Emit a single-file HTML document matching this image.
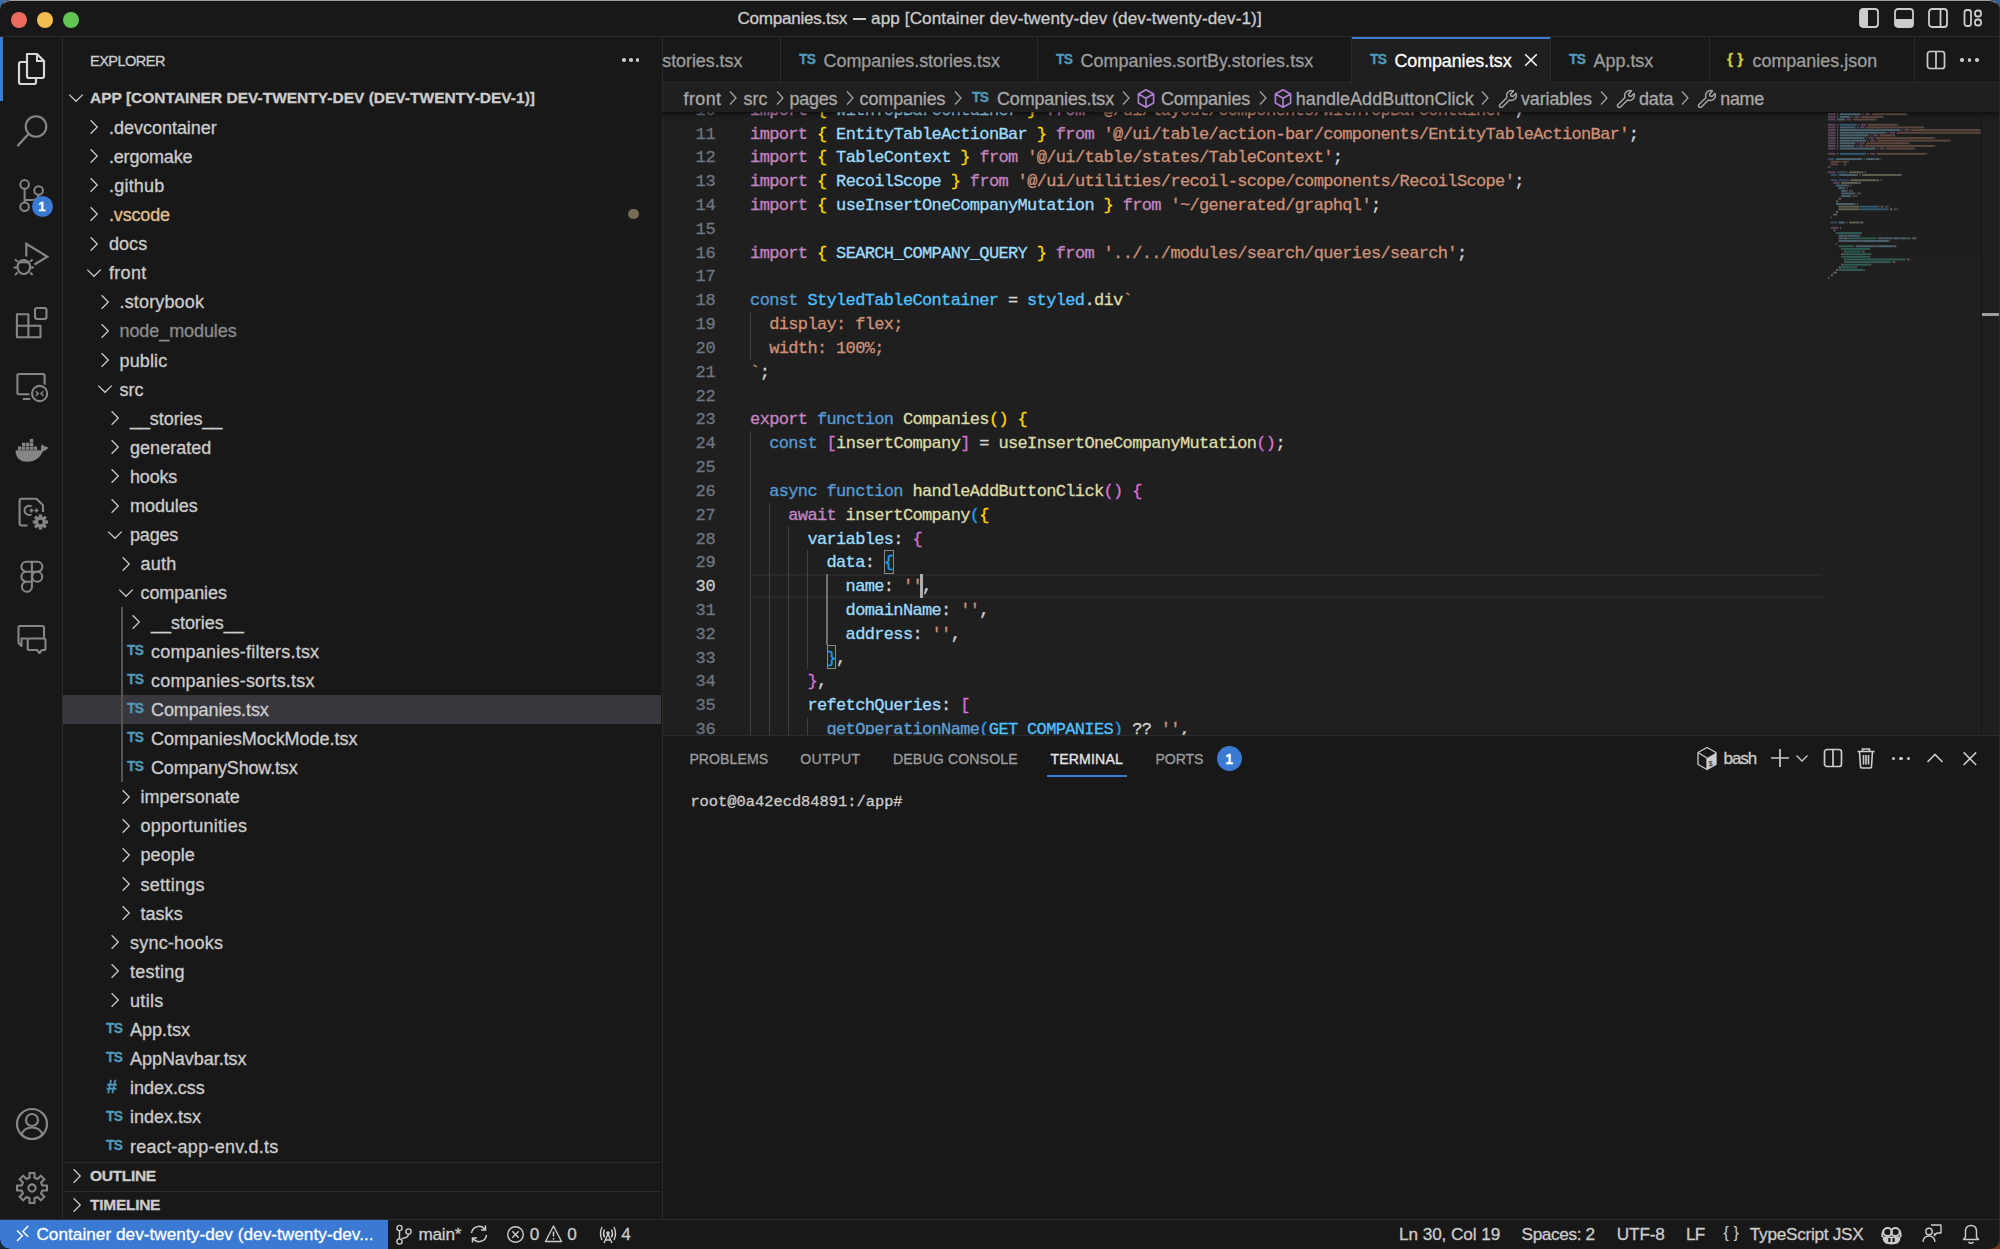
<!DOCTYPE html><html><head><meta charset="utf-8"><title>VS Code</title><style>
html,body{margin:0;padding:0;width:2000px;height:1249px;overflow:hidden;background:#181818;}
.t{position:absolute;white-space:pre;height:40px;line-height:40px;-webkit-text-stroke:0.3px;}
.r{position:absolute;}
</style></head><body>
<div class="r" style="left:0;top:0;width:14px;height:14px;background:#3b6ea6"></div>
<div class="r" style="right:0;top:0;width:14px;height:14px;background:#2f6196"></div>
<div class="r" style="left:0;bottom:0;width:14px;height:14px;background:#1a2536"></div>
<div class="r" style="right:0;bottom:0;width:14px;height:14px;background:#6e3415"></div>
<div class="r" style="left:0;top:0;width:2000px;height:1249px;border-radius:10px;overflow:hidden;">
<div class="r" style="left:0px;top:0px;width:2000px;height:1249px;background:#181818;"></div>
<div class="r" style="left:663px;top:83px;width:1337px;height:652px;background:#1f1f1f;"></div>
<div class="r" style="left:0px;top:36px;width:2000px;height:1px;background:#2b2b2b;"></div>
<div class="r" style="left:62px;top:37px;width:1px;height:1182px;background:#2b2b2b;"></div>
<div class="r" style="left:662px;top:37px;width:1px;height:1182px;background:#2b2b2b;"></div>
<div class="r" style="left:662px;top:82px;width:1338px;height:1px;background:#2b2b2b;"></div>
<div class="r" style="left:663px;top:734.6px;width:1337px;height:1.4px;background:#2b2b2b;"></div>
<div class="r" style="left:0px;top:1219px;width:2000px;height:1px;background:#2b2b2b;"></div>
<div class="r" style="left:10.50px;top:11.60px;width:16.20px;height:16.20px;border-radius:50%;background:#ed6a5e;"></div>
<div class="r" style="left:36.80px;top:11.60px;width:16.20px;height:16.20px;border-radius:50%;background:#f5bf4f;"></div>
<div class="r" style="left:63.30px;top:11.60px;width:16.20px;height:16.20px;border-radius:50%;background:#61c554;"></div>
<div class="t" style="left:737.5px;top:-1.50px;font-size:17.08px;color:#cccccc;font-weight:400;font-family:'Liberation Sans', sans-serif;letter-spacing:-0.266px;">Companies.tsx</div>
<div class="r" style="left:852.6px;top:18.2px;width:13px;height:1.4px;background:#cccccc;"></div>
<div class="t" style="left:871px;top:-1.50px;font-size:17.08px;color:#cccccc;font-weight:400;font-family:'Liberation Sans', sans-serif;letter-spacing:0.130px;">app [Container dev-twenty-dev (dev-twenty-dev-1)]</div>
<svg class="r" style="left:1859px;top:8px;" width="20" height="20" viewBox="0 0 20 20"><rect x="1" y="1" width="18" height="18" rx="3" fill="none" stroke="#cccccc" stroke-width="1.8"/><rect x="1" y="1" width="8" height="18" rx="2" fill="#cccccc"/></svg>
<svg class="r" style="left:1894px;top:8px;" width="20" height="20" viewBox="0 0 20 20"><rect x="1" y="1" width="18" height="18" rx="3" fill="none" stroke="#cccccc" stroke-width="1.8"/><rect x="1" y="11" width="18" height="8" rx="2" fill="#cccccc"/></svg>
<svg class="r" style="left:1928px;top:8px;" width="20" height="20" viewBox="0 0 20 20"><rect x="1" y="1" width="18" height="18" rx="3" fill="none" stroke="#cccccc" stroke-width="1.8"/><path d="M12.5 1 V19" stroke="#cccccc" stroke-width="1.8"/></svg>
<svg class="r" style="left:1963px;top:8px;" width="20" height="20" viewBox="0 0 20 20"><rect x="1.5" y="2" width="6.5" height="16" rx="2.5" fill="none" stroke="#cccccc" stroke-width="1.8"/><rect x="12" y="2.5" width="6" height="6" rx="2.5" fill="none" stroke="#cccccc" stroke-width="1.8"/><rect x="12" y="11.5" width="6" height="6" rx="2.5" fill="none" stroke="#cccccc" stroke-width="1.8"/></svg>
<div class="r" style="left:0px;top:37px;width:3px;height:64px;background:#3a7ad2;"></div>
<svg class="r" style="left:15px;top:50px;" width="32" height="38" viewBox="0 0 32 38"><path d="M12 4 H22 L29 11 V26 A2 2 0 0 1 27 28 H14 A2 2 0 0 1 12 26 Z" fill="none" stroke="#d7d7d7" stroke-width="2.2" stroke-linejoin="round"/><path d="M22 4 V11 H29" fill="none" stroke="#d7d7d7" stroke-width="2"/><path d="M12 12 H6 A2 2 0 0 0 4 14 V32 A2 2 0 0 0 6 34 H19 A2 2 0 0 0 21 32 V28" fill="none" stroke="#d7d7d7" stroke-width="2.2" stroke-linejoin="round"/></svg>
<svg class="r" style="left:14px;top:110px;" width="36" height="40" viewBox="0 0 36 40"><circle cx="22" cy="16.5" r="10.3" fill="none" stroke="#868686" stroke-width="2.1"/><path d="M14.5 24 L4 35.5" stroke="#868686" stroke-width="2.3" stroke-linecap="round"/></svg>
<svg class="r" style="left:14px;top:174px;" width="36" height="40" viewBox="0 0 36 40"><circle cx="10.6" cy="10.4" r="4.3" fill="none" stroke="#868686" stroke-width="2"/><circle cx="24.6" cy="16.5" r="4.3" fill="none" stroke="#868686" stroke-width="2"/><circle cx="10.6" cy="32.7" r="4.3" fill="none" stroke="#868686" stroke-width="2"/><path d="M10.6 14.7 V28.4 M24.6 20.8 Q24.6 26 18 26 H10.6" fill="none" stroke="#868686" stroke-width="2"/></svg>
<div class="r" style="left:31.70px;top:195.70px;width:21.20px;height:21.20px;border-radius:50%;background:#3a7ad2;"></div>
<div class="t" style="left:38.2px;top:186.50px;font-size:13px;color:#ffffff;font-weight:700;font-family:'Liberation Sans', sans-serif;letter-spacing:0.000px;">1</div>
<svg class="r" style="left:8px;top:170px;" width="48" height="110" viewBox="0 0 48 110"><path d="M18.3 86.5 V73.8 L39.3 86.7 L26.5 94.5" fill="none" stroke="#868686" stroke-width="2.2" stroke-linejoin="miter"/><ellipse cx="15.8" cy="97" rx="6.3" ry="7" fill="none" stroke="#868686" stroke-width="2.1"/><path d="M10 92.3 H21.6" stroke="#868686" stroke-width="2"/><path d="M9.6 91.6 L7 89.4 M9 97.5 H5.6 M9.6 102.6 L7 105 M22 91.6 L24.6 89.4 M22.6 97.5 H26 M22 102.6 L24.6 105" fill="none" stroke="#868686" stroke-width="2"/></svg>
<svg class="r" style="left:8px;top:296px;" width="48" height="60" viewBox="0 0 48 60"><path d="M8.9 18.2 H20.4 V29.8 H32.5 V41.2 H8.9 Z" fill="none" stroke="#868686" stroke-width="2.1" stroke-linejoin="round"/><path d="M8.9 29.8 H20.4 V41.2" fill="none" stroke="#868686" stroke-width="2.1"/><rect x="27" y="12" width="11.5" height="11" rx="2.2" fill="none" stroke="#868686" stroke-width="2.1"/></svg>
<svg class="r" style="left:8px;top:296px;" width="48" height="116" viewBox="0 0 48 116"><rect x="9.4" y="78" width="27.2" height="20.3" rx="1.5" fill="none" stroke="#868686" stroke-width="2.1"/><path d="M14.9 103 H22.3" stroke="#868686" stroke-width="2.1"/><circle cx="31.6" cy="97.5" r="10.2" fill="#181818"/><circle cx="31.6" cy="97.5" r="7.6" fill="none" stroke="#868686" stroke-width="2.1"/><path d="M27.8 95.3 L30.2 97.6 L27.8 99.9 M35.4 95.3 L33 97.6 L35.4 99.9" fill="none" stroke="#868686" stroke-width="1.5"/></svg>
<svg class="r" style="left:10px;top:425px;" width="44" height="50" viewBox="0 0 44 50"><path d="M5.6 25.2 H31 Q30.8 21.5 31.5 19.5 Q33 19.5 34.5 21.5 Q36.5 21.2 38.5 22.8 Q36.5 25.5 33 26.2 Q28.5 36.8 17 36.8 Q6.5 36.8 5.6 27 Z" fill="#868686"/><rect x="8.00" y="21.5" width="3.4" height="3.3" fill="#868686"/><rect x="11.92" y="21.5" width="3.4" height="3.3" fill="#868686"/><rect x="15.84" y="21.5" width="3.4" height="3.3" fill="#868686"/><rect x="19.76" y="21.5" width="3.4" height="3.3" fill="#868686"/><rect x="23.68" y="21.5" width="3.4" height="3.3" fill="#868686"/><rect x="12.00" y="17.7" width="3.4" height="3.3" fill="#868686"/><rect x="15.92" y="17.7" width="3.4" height="3.3" fill="#868686"/><rect x="19.84" y="17.7" width="3.4" height="3.3" fill="#868686"/><rect x="19.84" y="13.9" width="3.4" height="3.3" fill="#868686"/></svg>
<svg class="r" style="left:8px;top:490px;" width="48" height="48" viewBox="0 0 48 48"><path d="M19.5 35.5 H13.6 A2 2 0 0 1 11.6 33.5 V10.8 A2 2 0 0 1 13.6 8.8 H28.5 L35 15.3 V22" fill="none" stroke="#868686" stroke-width="2.1" stroke-linejoin="round"/><path d="M23.4 16.4 A4.6 4.6 0 1 0 23.4 24.4" fill="none" stroke="#868686" stroke-width="2"/><path d="M21.5 20.4 H25.5 M23.5 18.4 V22.4 M26.5 20.4 H30.5 M28.5 18.4 V22.4" stroke="#868686" stroke-width="1.5"/><circle cx="32.4" cy="32" r="10" fill="#181818"/><circle cx="32.4" cy="32" r="5.6" fill="#868686"/><rect x="-1.6" y="-7.6" width="3.2" height="4" transform="translate(32.4 32) rotate(0)" fill="#868686"/><rect x="-1.6" y="-7.6" width="3.2" height="4" transform="translate(32.4 32) rotate(45)" fill="#868686"/><rect x="-1.6" y="-7.6" width="3.2" height="4" transform="translate(32.4 32) rotate(90)" fill="#868686"/><rect x="-1.6" y="-7.6" width="3.2" height="4" transform="translate(32.4 32) rotate(135)" fill="#868686"/><rect x="-1.6" y="-7.6" width="3.2" height="4" transform="translate(32.4 32) rotate(180)" fill="#868686"/><rect x="-1.6" y="-7.6" width="3.2" height="4" transform="translate(32.4 32) rotate(225)" fill="#868686"/><rect x="-1.6" y="-7.6" width="3.2" height="4" transform="translate(32.4 32) rotate(270)" fill="#868686"/><rect x="-1.6" y="-7.6" width="3.2" height="4" transform="translate(32.4 32) rotate(315)" fill="#868686"/><circle cx="32.4" cy="32" r="2.3" fill="#181818"/></svg>
<svg class="r" style="left:8px;top:550px;" width="48" height="48" viewBox="0 0 48 48"><path d="M18.4 11.8 H29.4 A5 5 0 0 1 29.4 21.8 H18.4 A5 5 0 0 1 18.4 11.8 Z M23.9 11.8 V31.8 M18.4 21.8 H23.9 M18.4 21.8 A5 5 0 0 0 18.4 31.8 H23.9 M23.9 31.8 V37.2 A5 5 0 1 1 18.4 31.8" fill="none" stroke="#868686" stroke-width="2.1"/><circle cx="29.2" cy="26.8" r="5" fill="none" stroke="#868686" stroke-width="2.1"/></svg>
<svg class="r" style="left:8px;top:615px;" width="48" height="48" viewBox="0 0 48 48"><path d="M19.6 23.5 H13.5 V31 L10.5 28 V12.5 A1.5 1.5 0 0 1 12 11 H34.5 A1.5 1.5 0 0 1 36 12.5 V23.5" fill="none" stroke="#868686" stroke-width="2.1" stroke-linejoin="round"/><path d="M21.2 23.5 H36 A1.5 1.5 0 0 1 37.5 25 V33.5 A1.5 1.5 0 0 1 36 35 H34 L31.5 38 L29 35 H21.2 A1.5 1.5 0 0 1 19.7 33.5 V25 A1.5 1.5 0 0 1 21.2 23.5 Z" fill="none" stroke="#868686" stroke-width="2.1" stroke-linejoin="round"/></svg>
<svg class="r" style="left:14px;top:1106px;" width="36" height="36" viewBox="0 0 36 36"><circle cx="18" cy="18" r="15" fill="none" stroke="#868686" stroke-width="2.2"/><circle cx="18" cy="14" r="6" fill="none" stroke="#868686" stroke-width="2.2"/><path d="M7.5 28.5 Q10 21.5 18 21.5 Q26 21.5 28.5 28.5" fill="none" stroke="#868686" stroke-width="2.2"/></svg>
<svg class="r" style="left:14px;top:1170px;" width="36" height="36" viewBox="0 0 36 36"><path d="M15.53 7.69 L15.49 3.01 L20.51 3.01 L20.47 7.69 L23.54 8.96 L26.83 5.63 L30.37 9.17 L27.04 12.46 L28.31 15.53 L32.99 15.49 L32.99 20.51 L28.31 20.47 L27.04 23.54 L30.37 26.83 L26.83 30.37 L23.54 27.04 L20.47 28.31 L20.51 32.99 L15.49 32.99 L15.53 28.31 L12.46 27.04 L9.17 30.37 L5.63 26.83 L8.96 23.54 L7.69 20.47 L3.01 20.51 L3.01 15.49 L7.69 15.53 L8.96 12.46 L5.63 9.17 L9.17 5.63 L12.46 8.96 Z" fill="none" stroke="#868686" stroke-width="2.1" stroke-linejoin="round"/><circle cx="18" cy="18" r="3.6" fill="none" stroke="#868686" stroke-width="2.1"/></svg>
<div class="t" style="left:90px;top:41.30px;font-size:14.6px;color:#cccccc;font-weight:400;font-family:'Liberation Sans', sans-serif;letter-spacing:-0.561px;">EXPLORER</div>
<div class="r" style="left:622.30px;top:58.20px;width:3.60px;height:3.60px;border-radius:50%;background:#cccccc;"></div>
<div class="r" style="left:629.20px;top:58.20px;width:3.60px;height:3.60px;border-radius:50%;background:#cccccc;"></div>
<div class="r" style="left:635.70px;top:58.20px;width:3.60px;height:3.60px;border-radius:50%;background:#cccccc;"></div>
<div class="r" style="left:63px;top:695px;width:598px;height:29px;background:#37373d;"></div>
<div class="r" style="left:121px;top:607px;width:1.8px;height:175px;background:#555555;"></div>
<svg class="r" style="left:68px;top:90px;" width="16" height="16" viewBox="0 0 16 16"><path d="M1.3 4.6 L8 11.3 L14.7 4.6" fill="none" stroke="#cccccc" stroke-width="1.25"/></svg>
<div class="t" style="left:90px;top:78.00px;font-size:15.5px;color:#cccccc;font-weight:700;font-family:'Liberation Sans', sans-serif;letter-spacing:0.007px;">APP [CONTAINER DEV-TWENTY-DEV (DEV-TWENTY-DEV-1)]</div>
<svg class="r" style="left:86.4px;top:119.11px;" width="16" height="16" viewBox="0 0 16 16"><path d="M4.6 1.3 L11.3 8 L4.6 14.7" fill="none" stroke="#cccccc" stroke-width="1.25"/></svg>
<div class="t" style="left:109.0px;top:107.71px;font-size:18px;color:#cccccc;font-weight:400;font-family:'Liberation Sans', sans-serif;letter-spacing:-0.021px;">.devcontainer</div>
<svg class="r" style="left:86.4px;top:148.22px;" width="16" height="16" viewBox="0 0 16 16"><path d="M4.6 1.3 L11.3 8 L4.6 14.7" fill="none" stroke="#cccccc" stroke-width="1.25"/></svg>
<div class="t" style="left:109.0px;top:136.82px;font-size:18px;color:#cccccc;font-weight:400;font-family:'Liberation Sans', sans-serif;letter-spacing:-0.194px;">.ergomake</div>
<svg class="r" style="left:86.4px;top:177.32999999999998px;" width="16" height="16" viewBox="0 0 16 16"><path d="M4.6 1.3 L11.3 8 L4.6 14.7" fill="none" stroke="#cccccc" stroke-width="1.25"/></svg>
<div class="t" style="left:109.0px;top:165.93px;font-size:18px;color:#cccccc;font-weight:400;font-family:'Liberation Sans', sans-serif;letter-spacing:0.208px;">.github</div>
<svg class="r" style="left:86.4px;top:206.44px;" width="16" height="16" viewBox="0 0 16 16"><path d="M4.6 1.3 L11.3 8 L4.6 14.7" fill="none" stroke="#cccccc" stroke-width="1.25"/></svg>
<div class="t" style="left:109.0px;top:195.04px;font-size:18px;color:#e2c08d;font-weight:400;font-family:'Liberation Sans', sans-serif;letter-spacing:-0.164px;">.vscode</div>
<svg class="r" style="left:86.4px;top:235.55px;" width="16" height="16" viewBox="0 0 16 16"><path d="M4.6 1.3 L11.3 8 L4.6 14.7" fill="none" stroke="#cccccc" stroke-width="1.25"/></svg>
<div class="t" style="left:109.0px;top:224.15px;font-size:18px;color:#cccccc;font-weight:400;font-family:'Liberation Sans', sans-serif;letter-spacing:0.042px;">docs</div>
<svg class="r" style="left:86.4px;top:264.65999999999997px;" width="16" height="16" viewBox="0 0 16 16"><path d="M1.3 4.6 L8 11.3 L14.7 4.6" fill="none" stroke="#cccccc" stroke-width="1.25"/></svg>
<div class="t" style="left:109.0px;top:253.26px;font-size:18px;color:#cccccc;font-weight:400;font-family:'Liberation Sans', sans-serif;letter-spacing:0.294px;">front</div>
<svg class="r" style="left:96.9px;top:293.77px;" width="16" height="16" viewBox="0 0 16 16"><path d="M4.6 1.3 L11.3 8 L4.6 14.7" fill="none" stroke="#cccccc" stroke-width="1.25"/></svg>
<div class="t" style="left:119.5px;top:282.37px;font-size:18px;color:#cccccc;font-weight:400;font-family:'Liberation Sans', sans-serif;letter-spacing:0.155px;">.storybook</div>
<svg class="r" style="left:96.9px;top:322.88px;" width="16" height="16" viewBox="0 0 16 16"><path d="M4.6 1.3 L11.3 8 L4.6 14.7" fill="none" stroke="#cccccc" stroke-width="1.25"/></svg>
<div class="t" style="left:119.5px;top:311.48px;font-size:18px;color:#8c8c8c;font-weight:400;font-family:'Liberation Sans', sans-serif;letter-spacing:-0.083px;">node_modules</div>
<svg class="r" style="left:96.9px;top:351.99px;" width="16" height="16" viewBox="0 0 16 16"><path d="M4.6 1.3 L11.3 8 L4.6 14.7" fill="none" stroke="#cccccc" stroke-width="1.25"/></svg>
<div class="t" style="left:119.5px;top:340.59px;font-size:18px;color:#cccccc;font-weight:400;font-family:'Liberation Sans', sans-serif;letter-spacing:0.145px;">public</div>
<svg class="r" style="left:96.9px;top:381.1px;" width="16" height="16" viewBox="0 0 16 16"><path d="M1.3 4.6 L8 11.3 L14.7 4.6" fill="none" stroke="#cccccc" stroke-width="1.25"/></svg>
<div class="t" style="left:119.5px;top:369.70px;font-size:18px;color:#cccccc;font-weight:400;font-family:'Liberation Sans', sans-serif;letter-spacing:0.033px;">src</div>
<svg class="r" style="left:107.4px;top:410.21px;" width="16" height="16" viewBox="0 0 16 16"><path d="M4.6 1.3 L11.3 8 L4.6 14.7" fill="none" stroke="#cccccc" stroke-width="1.25"/></svg>
<div class="t" style="left:130.0px;top:398.81px;font-size:18px;color:#cccccc;font-weight:400;font-family:'Liberation Sans', sans-serif;letter-spacing:-0.078px;">__stories__</div>
<svg class="r" style="left:107.4px;top:439.32px;" width="16" height="16" viewBox="0 0 16 16"><path d="M4.6 1.3 L11.3 8 L4.6 14.7" fill="none" stroke="#cccccc" stroke-width="1.25"/></svg>
<div class="t" style="left:130.0px;top:427.92px;font-size:18px;color:#cccccc;font-weight:400;font-family:'Liberation Sans', sans-serif;letter-spacing:0.036px;">generated</div>
<svg class="r" style="left:107.4px;top:468.43px;" width="16" height="16" viewBox="0 0 16 16"><path d="M4.6 1.3 L11.3 8 L4.6 14.7" fill="none" stroke="#cccccc" stroke-width="1.25"/></svg>
<div class="t" style="left:130.0px;top:457.03px;font-size:18px;color:#cccccc;font-weight:400;font-family:'Liberation Sans', sans-serif;letter-spacing:-0.189px;">hooks</div>
<svg class="r" style="left:107.4px;top:497.53999999999996px;" width="16" height="16" viewBox="0 0 16 16"><path d="M4.6 1.3 L11.3 8 L4.6 14.7" fill="none" stroke="#cccccc" stroke-width="1.25"/></svg>
<div class="t" style="left:130.0px;top:486.14px;font-size:18px;color:#cccccc;font-weight:400;font-family:'Liberation Sans', sans-serif;letter-spacing:-0.050px;">modules</div>
<svg class="r" style="left:107.4px;top:526.65px;" width="16" height="16" viewBox="0 0 16 16"><path d="M1.3 4.6 L8 11.3 L14.7 4.6" fill="none" stroke="#cccccc" stroke-width="1.25"/></svg>
<div class="t" style="left:130.0px;top:515.25px;font-size:18px;color:#cccccc;font-weight:400;font-family:'Liberation Sans', sans-serif;letter-spacing:-0.169px;">pages</div>
<svg class="r" style="left:117.9px;top:555.76px;" width="16" height="16" viewBox="0 0 16 16"><path d="M4.6 1.3 L11.3 8 L4.6 14.7" fill="none" stroke="#cccccc" stroke-width="1.25"/></svg>
<div class="t" style="left:140.5px;top:544.36px;font-size:18px;color:#cccccc;font-weight:400;font-family:'Liberation Sans', sans-serif;letter-spacing:0.213px;">auth</div>
<svg class="r" style="left:117.9px;top:584.87px;" width="16" height="16" viewBox="0 0 16 16"><path d="M1.3 4.6 L8 11.3 L14.7 4.6" fill="none" stroke="#cccccc" stroke-width="1.25"/></svg>
<div class="t" style="left:140.5px;top:573.47px;font-size:18px;color:#cccccc;font-weight:400;font-family:'Liberation Sans', sans-serif;letter-spacing:-0.072px;">companies</div>
<svg class="r" style="left:128.4px;top:613.98px;" width="16" height="16" viewBox="0 0 16 16"><path d="M4.6 1.3 L11.3 8 L4.6 14.7" fill="none" stroke="#cccccc" stroke-width="1.25"/></svg>
<div class="t" style="left:151.0px;top:602.58px;font-size:18px;color:#cccccc;font-weight:400;font-family:'Liberation Sans', sans-serif;letter-spacing:-0.033px;">__stories__</div>
<div class="t" style="left:127.0px;top:630.79px;font-size:13.8px;color:#519aba;font-weight:700;font-family:'Liberation Sans', sans-serif;letter-spacing:-0.570px;">TS</div>
<div class="t" style="left:151.0px;top:631.69px;font-size:18px;color:#cccccc;font-weight:400;font-family:'Liberation Sans', sans-serif;letter-spacing:0.202px;">companies-filters.tsx</div>
<div class="t" style="left:127.0px;top:659.90px;font-size:13.8px;color:#519aba;font-weight:700;font-family:'Liberation Sans', sans-serif;letter-spacing:-0.570px;">TS</div>
<div class="t" style="left:151.0px;top:660.80px;font-size:18px;color:#cccccc;font-weight:400;font-family:'Liberation Sans', sans-serif;letter-spacing:0.186px;">companies-sorts.tsx</div>
<div class="t" style="left:127.0px;top:689.01px;font-size:13.8px;color:#519aba;font-weight:700;font-family:'Liberation Sans', sans-serif;letter-spacing:-0.570px;">TS</div>
<div class="t" style="left:151.0px;top:689.91px;font-size:18px;color:#cccccc;font-weight:400;font-family:'Liberation Sans', sans-serif;letter-spacing:-0.105px;">Companies.tsx</div>
<div class="t" style="left:127.0px;top:718.12px;font-size:13.8px;color:#519aba;font-weight:700;font-family:'Liberation Sans', sans-serif;letter-spacing:-0.570px;">TS</div>
<div class="t" style="left:151.0px;top:719.02px;font-size:18px;color:#cccccc;font-weight:400;font-family:'Liberation Sans', sans-serif;letter-spacing:-0.033px;">CompaniesMockMode.tsx</div>
<div class="t" style="left:127.0px;top:747.23px;font-size:13.8px;color:#519aba;font-weight:700;font-family:'Liberation Sans', sans-serif;letter-spacing:-0.570px;">TS</div>
<div class="t" style="left:151.0px;top:748.13px;font-size:18px;color:#cccccc;font-weight:400;font-family:'Liberation Sans', sans-serif;letter-spacing:-0.172px;">CompanyShow.tsx</div>
<svg class="r" style="left:117.9px;top:788.64px;" width="16" height="16" viewBox="0 0 16 16"><path d="M4.6 1.3 L11.3 8 L4.6 14.7" fill="none" stroke="#cccccc" stroke-width="1.25"/></svg>
<div class="t" style="left:140.5px;top:777.24px;font-size:18px;color:#cccccc;font-weight:400;font-family:'Liberation Sans', sans-serif;letter-spacing:0.022px;">impersonate</div>
<svg class="r" style="left:117.9px;top:817.75px;" width="16" height="16" viewBox="0 0 16 16"><path d="M4.6 1.3 L11.3 8 L4.6 14.7" fill="none" stroke="#cccccc" stroke-width="1.25"/></svg>
<div class="t" style="left:140.5px;top:806.35px;font-size:18px;color:#cccccc;font-weight:400;font-family:'Liberation Sans', sans-serif;letter-spacing:0.279px;">opportunities</div>
<svg class="r" style="left:117.9px;top:846.86px;" width="16" height="16" viewBox="0 0 16 16"><path d="M4.6 1.3 L11.3 8 L4.6 14.7" fill="none" stroke="#cccccc" stroke-width="1.25"/></svg>
<div class="t" style="left:140.5px;top:835.46px;font-size:18px;color:#cccccc;font-weight:400;font-family:'Liberation Sans', sans-serif;letter-spacing:0.056px;">people</div>
<svg class="r" style="left:117.9px;top:875.97px;" width="16" height="16" viewBox="0 0 16 16"><path d="M4.6 1.3 L11.3 8 L4.6 14.7" fill="none" stroke="#cccccc" stroke-width="1.25"/></svg>
<div class="t" style="left:140.5px;top:864.57px;font-size:18px;color:#cccccc;font-weight:400;font-family:'Liberation Sans', sans-serif;letter-spacing:0.282px;">settings</div>
<svg class="r" style="left:117.9px;top:905.0799999999999px;" width="16" height="16" viewBox="0 0 16 16"><path d="M4.6 1.3 L11.3 8 L4.6 14.7" fill="none" stroke="#cccccc" stroke-width="1.25"/></svg>
<div class="t" style="left:140.5px;top:893.68px;font-size:18px;color:#cccccc;font-weight:400;font-family:'Liberation Sans', sans-serif;letter-spacing:0.037px;">tasks</div>
<svg class="r" style="left:107.4px;top:934.1899999999999px;" width="16" height="16" viewBox="0 0 16 16"><path d="M4.6 1.3 L11.3 8 L4.6 14.7" fill="none" stroke="#cccccc" stroke-width="1.25"/></svg>
<div class="t" style="left:130.0px;top:922.79px;font-size:18px;color:#cccccc;font-weight:400;font-family:'Liberation Sans', sans-serif;letter-spacing:0.215px;">sync-hooks</div>
<svg class="r" style="left:107.4px;top:963.3px;" width="16" height="16" viewBox="0 0 16 16"><path d="M4.6 1.3 L11.3 8 L4.6 14.7" fill="none" stroke="#cccccc" stroke-width="1.25"/></svg>
<div class="t" style="left:130.0px;top:951.90px;font-size:18px;color:#cccccc;font-weight:400;font-family:'Liberation Sans', sans-serif;letter-spacing:0.265px;">testing</div>
<svg class="r" style="left:107.4px;top:992.41px;" width="16" height="16" viewBox="0 0 16 16"><path d="M4.6 1.3 L11.3 8 L4.6 14.7" fill="none" stroke="#cccccc" stroke-width="1.25"/></svg>
<div class="t" style="left:130.0px;top:981.01px;font-size:18px;color:#cccccc;font-weight:400;font-family:'Liberation Sans', sans-serif;letter-spacing:0.317px;">utils</div>
<div class="t" style="left:106.0px;top:1009.22px;font-size:13.8px;color:#519aba;font-weight:700;font-family:'Liberation Sans', sans-serif;letter-spacing:-0.570px;">TS</div>
<div class="t" style="left:130.0px;top:1010.12px;font-size:18px;color:#cccccc;font-weight:400;font-family:'Liberation Sans', sans-serif;letter-spacing:0.010px;">App.tsx</div>
<div class="t" style="left:106.0px;top:1038.33px;font-size:13.8px;color:#519aba;font-weight:700;font-family:'Liberation Sans', sans-serif;letter-spacing:-0.570px;">TS</div>
<div class="t" style="left:130.0px;top:1039.23px;font-size:18px;color:#cccccc;font-weight:400;font-family:'Liberation Sans', sans-serif;letter-spacing:-0.043px;">AppNavbar.tsx</div>
<div class="t" style="left:106.5px;top:1067.44px;font-size:19px;color:#519aba;font-weight:700;font-family:'Liberation Sans', sans-serif;letter-spacing:0.000px;">#</div>
<div class="t" style="left:130.0px;top:1068.34px;font-size:18px;color:#cccccc;font-weight:400;font-family:'Liberation Sans', sans-serif;letter-spacing:-0.027px;">index.css</div>
<div class="t" style="left:106.0px;top:1096.55px;font-size:13.8px;color:#519aba;font-weight:700;font-family:'Liberation Sans', sans-serif;letter-spacing:-0.570px;">TS</div>
<div class="t" style="left:130.0px;top:1097.45px;font-size:18px;color:#cccccc;font-weight:400;font-family:'Liberation Sans', sans-serif;letter-spacing:0.006px;">index.tsx</div>
<div class="t" style="left:106.0px;top:1125.66px;font-size:13.8px;color:#519aba;font-weight:700;font-family:'Liberation Sans', sans-serif;letter-spacing:-0.570px;">TS</div>
<div class="t" style="left:130.0px;top:1126.56px;font-size:18px;color:#cccccc;font-weight:400;font-family:'Liberation Sans', sans-serif;letter-spacing:0.264px;">react-app-env.d.ts</div>
<div class="r" style="left:628.30px;top:208.90px;width:10.40px;height:10.40px;border-radius:50%;background:#776b56;"></div>
<div class="r" style="left:63px;top:1162px;width:598px;height:1px;background:#2b2b2b;"></div>
<div class="r" style="left:63px;top:1191px;width:598px;height:1px;background:#2b2b2b;"></div>
<svg class="r" style="left:69px;top:1168px;" width="16" height="16" viewBox="0 0 16 16"><path d="M4.6 1.3 L11.3 8 L4.6 14.7" fill="none" stroke="#cccccc" stroke-width="1.25"/></svg>
<div class="t" style="left:90px;top:1156.00px;font-size:15.5px;color:#cccccc;font-weight:700;font-family:'Liberation Sans', sans-serif;letter-spacing:-0.319px;">OUTLINE</div>
<svg class="r" style="left:69px;top:1197px;" width="16" height="16" viewBox="0 0 16 16"><path d="M4.6 1.3 L11.3 8 L4.6 14.7" fill="none" stroke="#cccccc" stroke-width="1.25"/></svg>
<div class="t" style="left:90px;top:1185.00px;font-size:15.5px;color:#cccccc;font-weight:700;font-family:'Liberation Sans', sans-serif;letter-spacing:-0.268px;">TIMELINE</div>
<div class="r" style="left:780px;top:37px;width:1px;height:45px;background:#2b2b2b;"></div>
<div class="t" style="left:662.3px;top:40.70px;font-size:17.9px;color:#9d9d9d;font-weight:400;font-family:'Liberation Sans', sans-serif;letter-spacing:-0.048px;">stories.tsx</div>
<div class="r" style="left:1037px;top:37px;width:1px;height:45px;background:#2b2b2b;"></div>
<div class="t" style="left:799px;top:39.70px;font-size:13.8px;color:#519aba;font-weight:700;font-family:'Liberation Sans', sans-serif;letter-spacing:-0.570px;">TS</div>
<div class="t" style="left:823.5px;top:40.70px;font-size:17.9px;color:#9d9d9d;font-weight:400;font-family:'Liberation Sans', sans-serif;letter-spacing:0.019px;">Companies.stories.tsx</div>
<div class="r" style="left:1351px;top:37px;width:1px;height:45px;background:#2b2b2b;"></div>
<div class="t" style="left:1056px;top:39.70px;font-size:13.8px;color:#519aba;font-weight:700;font-family:'Liberation Sans', sans-serif;letter-spacing:-0.570px;">TS</div>
<div class="t" style="left:1080.5px;top:40.70px;font-size:17.9px;color:#9d9d9d;font-weight:400;font-family:'Liberation Sans', sans-serif;letter-spacing:0.088px;">Companies.sortBy.stories.tsx</div>
<div class="r" style="left:1352px;top:37px;width:198px;height:46px;background:#1f1f1f;"></div>
<div class="r" style="left:1352px;top:37px;width:198px;height:2px;background:#3a7ad2;"></div>
<div class="r" style="left:1550px;top:37px;width:1px;height:45px;background:#2b2b2b;"></div>
<div class="t" style="left:1370px;top:39.70px;font-size:13.8px;color:#519aba;font-weight:700;font-family:'Liberation Sans', sans-serif;letter-spacing:-0.570px;">TS</div>
<div class="t" style="left:1394.5px;top:40.70px;font-size:17.9px;color:#ffffff;font-weight:400;font-family:'Liberation Sans', sans-serif;letter-spacing:-0.102px;">Companies.tsx</div>
<div class="r" style="left:1709px;top:37px;width:1px;height:45px;background:#2b2b2b;"></div>
<div class="t" style="left:1569px;top:39.70px;font-size:13.8px;color:#519aba;font-weight:700;font-family:'Liberation Sans', sans-serif;letter-spacing:-0.570px;">TS</div>
<div class="t" style="left:1593.5px;top:40.70px;font-size:17.9px;color:#9d9d9d;font-weight:400;font-family:'Liberation Sans', sans-serif;letter-spacing:0.018px;">App.tsx</div>
<div class="r" style="left:1914px;top:37px;width:1px;height:45px;background:#2b2b2b;"></div>
<div class="t" style="left:1727px;top:39.00px;font-size:15.5px;color:#cbcb41;font-weight:700;font-family:'Liberation Sans', sans-serif;letter-spacing:0.000px;">{ }</div>
<div class="t" style="left:1752.5px;top:40.70px;font-size:17.9px;color:#9d9d9d;font-weight:400;font-family:'Liberation Sans', sans-serif;letter-spacing:0.021px;">companies.json</div>
<svg class="r" style="left:1523px;top:52px;" width="16" height="16" viewBox="0 0 16 16"><path d="M2.2 2.2 L13.8 13.8 M13.8 2.2 L2.2 13.8" stroke="#ffffff" stroke-width="1.5"/></svg>
<svg class="r" style="left:1926px;top:50px;" width="20" height="20" viewBox="0 0 20 20"><rect x="1.5" y="1.5" width="17" height="17" rx="2.5" fill="none" stroke="#cccccc" stroke-width="1.7"/><path d="M10 1.5 V18.5" stroke="#cccccc" stroke-width="1.7"/></svg>
<div class="r" style="left:1960.20px;top:58.20px;width:3.60px;height:3.60px;border-radius:50%;background:#cccccc;"></div>
<div class="r" style="left:1967.70px;top:58.20px;width:3.60px;height:3.60px;border-radius:50%;background:#cccccc;"></div>
<div class="r" style="left:1975.20px;top:58.20px;width:3.60px;height:3.60px;border-radius:50%;background:#cccccc;"></div>
<div class="t" style="left:683.5px;top:78.70px;font-size:17.9px;color:#a9a9a9;font-weight:400;font-family:'Liberation Sans', sans-serif;letter-spacing:0.438px;">front</div>
<svg class="r" style="left:727px;top:90px;" width="12" height="16" viewBox="0 0 12 16"><path d="M3 1.5 L9 8 L3 14.5" fill="none" stroke="#a9a9a9" stroke-width="1.2"/></svg>
<div class="t" style="left:743.5px;top:78.70px;font-size:17.9px;color:#a9a9a9;font-weight:400;font-family:'Liberation Sans', sans-serif;letter-spacing:0.047px;">src</div>
<svg class="r" style="left:774px;top:90px;" width="12" height="16" viewBox="0 0 12 16"><path d="M3 1.5 L9 8 L3 14.5" fill="none" stroke="#a9a9a9" stroke-width="1.2"/></svg>
<div class="t" style="left:789.4px;top:78.70px;font-size:17.9px;color:#a9a9a9;font-weight:400;font-family:'Liberation Sans', sans-serif;letter-spacing:-0.150px;">pages</div>
<svg class="r" style="left:844px;top:90px;" width="12" height="16" viewBox="0 0 12 16"><path d="M3 1.5 L9 8 L3 14.5" fill="none" stroke="#a9a9a9" stroke-width="1.2"/></svg>
<div class="t" style="left:859.6px;top:78.70px;font-size:17.9px;color:#a9a9a9;font-weight:400;font-family:'Liberation Sans', sans-serif;letter-spacing:-0.081px;">companies</div>
<svg class="r" style="left:952px;top:90px;" width="12" height="16" viewBox="0 0 12 16"><path d="M3 1.5 L9 8 L3 14.5" fill="none" stroke="#a9a9a9" stroke-width="1.2"/></svg>
<div class="t" style="left:972px;top:77.70px;font-size:13.8px;color:#519aba;font-weight:700;font-family:'Liberation Sans', sans-serif;letter-spacing:-0.570px;">TS</div>
<div class="t" style="left:997px;top:78.70px;font-size:17.9px;color:#a9a9a9;font-weight:400;font-family:'Liberation Sans', sans-serif;letter-spacing:-0.102px;">Companies.tsx</div>
<svg class="r" style="left:1120px;top:90px;" width="12" height="16" viewBox="0 0 12 16"><path d="M3 1.5 L9 8 L3 14.5" fill="none" stroke="#a9a9a9" stroke-width="1.2"/></svg>
<svg class="r" style="left:1137px;top:87.5px;" width="18" height="21" viewBox="0 0 18 21"><path d="M9 1.8 L16.6 6 V15 L9 19.2 L1.4 15 V6 Z M1.4 6 L9 10.2 L16.6 6 M9 10.2 V19.2" fill="none" stroke="#b180d7" stroke-width="1.6" stroke-linejoin="round"/></svg>
<div class="t" style="left:1161px;top:78.70px;font-size:17.9px;color:#a9a9a9;font-weight:400;font-family:'Liberation Sans', sans-serif;letter-spacing:-0.167px;">Companies</div>
<svg class="r" style="left:1256.5px;top:90px;" width="12" height="16" viewBox="0 0 12 16"><path d="M3 1.5 L9 8 L3 14.5" fill="none" stroke="#a9a9a9" stroke-width="1.2"/></svg>
<svg class="r" style="left:1273.5px;top:87.5px;" width="18" height="21" viewBox="0 0 18 21"><path d="M9 1.8 L16.6 6 V15 L9 19.2 L1.4 15 V6 Z M1.4 6 L9 10.2 L16.6 6 M9 10.2 V19.2" fill="none" stroke="#b180d7" stroke-width="1.6" stroke-linejoin="round"/></svg>
<div class="t" style="left:1295.8px;top:78.70px;font-size:17.9px;color:#a9a9a9;font-weight:400;font-family:'Liberation Sans', sans-serif;letter-spacing:0.093px;">handleAddButtonClick</div>
<svg class="r" style="left:1479px;top:90px;" width="12" height="16" viewBox="0 0 12 16"><path d="M3 1.5 L9 8 L3 14.5" fill="none" stroke="#a9a9a9" stroke-width="1.2"/></svg>
<svg class="r" style="left:1496.5px;top:88px;" width="20" height="20" viewBox="0 0 20 20"><path d="M3 16.5 L10 9.5 A5 5 0 0 1 16.5 3 L13.5 6 L14 8 L16 8.5 L19 5.5 A5 5 0 0 1 12.5 12 L5.5 19 A1.6 1.6 0 0 1 3 16.5 Z" fill="none" stroke="#a9a9a9" stroke-width="1.4" stroke-linejoin="round"/></svg>
<div class="t" style="left:1521px;top:78.70px;font-size:17.9px;color:#a9a9a9;font-weight:400;font-family:'Liberation Sans', sans-serif;letter-spacing:-0.090px;">variables</div>
<svg class="r" style="left:1598px;top:90px;" width="12" height="16" viewBox="0 0 12 16"><path d="M3 1.5 L9 8 L3 14.5" fill="none" stroke="#a9a9a9" stroke-width="1.2"/></svg>
<svg class="r" style="left:1614.5px;top:88px;" width="20" height="20" viewBox="0 0 20 20"><path d="M3 16.5 L10 9.5 A5 5 0 0 1 16.5 3 L13.5 6 L14 8 L16 8.5 L19 5.5 A5 5 0 0 1 12.5 12 L5.5 19 A1.6 1.6 0 0 1 3 16.5 Z" fill="none" stroke="#a9a9a9" stroke-width="1.4" stroke-linejoin="round"/></svg>
<div class="t" style="left:1639px;top:78.70px;font-size:17.9px;color:#a9a9a9;font-weight:400;font-family:'Liberation Sans', sans-serif;letter-spacing:-0.107px;">data</div>
<svg class="r" style="left:1679px;top:90px;" width="12" height="16" viewBox="0 0 12 16"><path d="M3 1.5 L9 8 L3 14.5" fill="none" stroke="#a9a9a9" stroke-width="1.2"/></svg>
<svg class="r" style="left:1696px;top:88px;" width="20" height="20" viewBox="0 0 20 20"><path d="M3 16.5 L10 9.5 A5 5 0 0 1 16.5 3 L13.5 6 L14 8 L16 8.5 L19 5.5 A5 5 0 0 1 12.5 12 L5.5 19 A1.6 1.6 0 0 1 3 16.5 Z" fill="none" stroke="#a9a9a9" stroke-width="1.4" stroke-linejoin="round"/></svg>
<div class="t" style="left:1720.2px;top:78.70px;font-size:17.9px;color:#a9a9a9;font-weight:400;font-family:'Liberation Sans', sans-serif;letter-spacing:-0.241px;">name</div>
<div class="r" style="left:662px;top:112px;width:1338px;height:623px;overflow:hidden">
<div class="r" style="left:90px;top:461.79999999999995px;width:1070px;height:20px;border-top:2px solid #282828;border-bottom:2px solid #282828"></div>
<div class="r" style="left:87.9px;top:200.1px;width:1.3px;height:47.6px;background:#404040"></div>
<div class="r" style="left:87.9px;top:319.2px;width:1.3px;height:309.6px;background:#404040"></div>
<div class="r" style="left:107.0px;top:390.6px;width:1.3px;height:238.2px;background:#404040"></div>
<div class="r" style="left:126.1px;top:414.4px;width:1.3px;height:214.4px;background:#404040"></div>
<div class="r" style="left:145.2px;top:438.3px;width:1.3px;height:119.1px;background:#404040"></div>
<div class="r" style="left:145.2px;top:605.0px;width:1.3px;height:23.8px;background:#404040"></div>
<div class="r" style="left:164.3px;top:462.1px;width:1.3px;height:71.4px;background:#707070"></div>
<div class="r" style="left:222.1px;top:438.1px;width:7.6px;height:21.5px;border:1px solid #888888;background:rgba(0,100,0,0.1)"></div>
<div class="r" style="left:164.8px;top:533.3px;width:7.6px;height:21.5px;border:1px solid #888888;background:rgba(0,100,0,0.1)"></div>
<div class="t" style="left:0px;top:-21.25px;font-size:17.0px;color:#6e7681;font-weight:400;font-family:'Liberation Mono', monospace;letter-spacing:0.000px;width:53.799999999999955px;text-align:right;">10</div>
<div class="t" style="left:88.09999999999998px;top:-21.25px;font-size:17.0px;color:#d4d4d4;font-weight:400;font-family:'Liberation Mono', monospace;letter-spacing:0.000px;letter-spacing:-0.652px;"><span style="color:#c586c0">import</span><span style="color:#d4d4d4"> </span><span style="color:#ffd700">{</span><span style="color:#d4d4d4"> </span><span style="color:#9cdcfe">WithTopBarContainer</span><span style="color:#d4d4d4"> </span><span style="color:#ffd700">}</span><span style="color:#d4d4d4"> </span><span style="color:#c586c0">from</span><span style="color:#d4d4d4"> </span><span style="color:#ce9178">&#x27;@/ui/layout/components/WithTopBarContainer&#x27;</span><span style="color:#d4d4d4">;</span></div>
<div class="t" style="left:0px;top:2.57px;font-size:17.0px;color:#6e7681;font-weight:400;font-family:'Liberation Mono', monospace;letter-spacing:0.000px;width:53.799999999999955px;text-align:right;">11</div>
<div class="t" style="left:88.09999999999998px;top:2.57px;font-size:17.0px;color:#d4d4d4;font-weight:400;font-family:'Liberation Mono', monospace;letter-spacing:0.000px;letter-spacing:-0.652px;"><span style="color:#c586c0">import</span><span style="color:#d4d4d4"> </span><span style="color:#ffd700">{</span><span style="color:#d4d4d4"> </span><span style="color:#9cdcfe">EntityTableActionBar</span><span style="color:#d4d4d4"> </span><span style="color:#ffd700">}</span><span style="color:#d4d4d4"> </span><span style="color:#c586c0">from</span><span style="color:#d4d4d4"> </span><span style="color:#ce9178">&#x27;@/ui/table/action-bar/components/EntityTableActionBar&#x27;</span><span style="color:#d4d4d4">;</span></div>
<div class="t" style="left:0px;top:26.39px;font-size:17.0px;color:#6e7681;font-weight:400;font-family:'Liberation Mono', monospace;letter-spacing:0.000px;width:53.799999999999955px;text-align:right;">12</div>
<div class="t" style="left:88.09999999999998px;top:26.39px;font-size:17.0px;color:#d4d4d4;font-weight:400;font-family:'Liberation Mono', monospace;letter-spacing:0.000px;letter-spacing:-0.652px;"><span style="color:#c586c0">import</span><span style="color:#d4d4d4"> </span><span style="color:#ffd700">{</span><span style="color:#d4d4d4"> </span><span style="color:#9cdcfe">TableContext</span><span style="color:#d4d4d4"> </span><span style="color:#ffd700">}</span><span style="color:#d4d4d4"> </span><span style="color:#c586c0">from</span><span style="color:#d4d4d4"> </span><span style="color:#ce9178">&#x27;@/ui/table/states/TableContext&#x27;</span><span style="color:#d4d4d4">;</span></div>
<div class="t" style="left:0px;top:50.21px;font-size:17.0px;color:#6e7681;font-weight:400;font-family:'Liberation Mono', monospace;letter-spacing:0.000px;width:53.799999999999955px;text-align:right;">13</div>
<div class="t" style="left:88.09999999999998px;top:50.21px;font-size:17.0px;color:#d4d4d4;font-weight:400;font-family:'Liberation Mono', monospace;letter-spacing:0.000px;letter-spacing:-0.652px;"><span style="color:#c586c0">import</span><span style="color:#d4d4d4"> </span><span style="color:#ffd700">{</span><span style="color:#d4d4d4"> </span><span style="color:#9cdcfe">RecoilScope</span><span style="color:#d4d4d4"> </span><span style="color:#ffd700">}</span><span style="color:#d4d4d4"> </span><span style="color:#c586c0">from</span><span style="color:#d4d4d4"> </span><span style="color:#ce9178">&#x27;@/ui/utilities/recoil-scope/components/RecoilScope&#x27;</span><span style="color:#d4d4d4">;</span></div>
<div class="t" style="left:0px;top:74.03px;font-size:17.0px;color:#6e7681;font-weight:400;font-family:'Liberation Mono', monospace;letter-spacing:0.000px;width:53.799999999999955px;text-align:right;">14</div>
<div class="t" style="left:88.09999999999998px;top:74.03px;font-size:17.0px;color:#d4d4d4;font-weight:400;font-family:'Liberation Mono', monospace;letter-spacing:0.000px;letter-spacing:-0.652px;"><span style="color:#c586c0">import</span><span style="color:#d4d4d4"> </span><span style="color:#ffd700">{</span><span style="color:#d4d4d4"> </span><span style="color:#9cdcfe">useInsertOneCompanyMutation</span><span style="color:#d4d4d4"> </span><span style="color:#ffd700">}</span><span style="color:#d4d4d4"> </span><span style="color:#c586c0">from</span><span style="color:#d4d4d4"> </span><span style="color:#ce9178">&#x27;~/generated/graphql&#x27;</span><span style="color:#d4d4d4">;</span></div>
<div class="t" style="left:0px;top:97.85px;font-size:17.0px;color:#6e7681;font-weight:400;font-family:'Liberation Mono', monospace;letter-spacing:0.000px;width:53.799999999999955px;text-align:right;">15</div>
<div class="t" style="left:0px;top:121.67px;font-size:17.0px;color:#6e7681;font-weight:400;font-family:'Liberation Mono', monospace;letter-spacing:0.000px;width:53.799999999999955px;text-align:right;">16</div>
<div class="t" style="left:88.09999999999998px;top:121.67px;font-size:17.0px;color:#d4d4d4;font-weight:400;font-family:'Liberation Mono', monospace;letter-spacing:0.000px;letter-spacing:-0.652px;"><span style="color:#c586c0">import</span><span style="color:#d4d4d4"> </span><span style="color:#ffd700">{</span><span style="color:#d4d4d4"> </span><span style="color:#9cdcfe">SEARCH_COMPANY_QUERY</span><span style="color:#d4d4d4"> </span><span style="color:#ffd700">}</span><span style="color:#d4d4d4"> </span><span style="color:#c586c0">from</span><span style="color:#d4d4d4"> </span><span style="color:#ce9178">&#x27;../../modules/search/queries/search&#x27;</span><span style="color:#d4d4d4">;</span></div>
<div class="t" style="left:0px;top:145.49px;font-size:17.0px;color:#6e7681;font-weight:400;font-family:'Liberation Mono', monospace;letter-spacing:0.000px;width:53.799999999999955px;text-align:right;">17</div>
<div class="t" style="left:0px;top:169.31px;font-size:17.0px;color:#6e7681;font-weight:400;font-family:'Liberation Mono', monospace;letter-spacing:0.000px;width:53.799999999999955px;text-align:right;">18</div>
<div class="t" style="left:88.09999999999998px;top:169.31px;font-size:17.0px;color:#d4d4d4;font-weight:400;font-family:'Liberation Mono', monospace;letter-spacing:0.000px;letter-spacing:-0.652px;"><span style="color:#569cd6">const</span><span style="color:#d4d4d4"> </span><span style="color:#4fc1ff">StyledTableContainer</span><span style="color:#d4d4d4"> = </span><span style="color:#4fc1ff">styled</span><span style="color:#d4d4d4">.</span><span style="color:#dcdcaa">div</span><span style="color:#ce9178">`</span></div>
<div class="t" style="left:0px;top:193.13px;font-size:17.0px;color:#6e7681;font-weight:400;font-family:'Liberation Mono', monospace;letter-spacing:0.000px;width:53.799999999999955px;text-align:right;">19</div>
<div class="t" style="left:88.09999999999998px;top:193.13px;font-size:17.0px;color:#d4d4d4;font-weight:400;font-family:'Liberation Mono', monospace;letter-spacing:0.000px;letter-spacing:-0.652px;"><span style="color:#d4d4d4">  </span><span style="color:#ce9178">display: flex;</span></div>
<div class="t" style="left:0px;top:216.95px;font-size:17.0px;color:#6e7681;font-weight:400;font-family:'Liberation Mono', monospace;letter-spacing:0.000px;width:53.799999999999955px;text-align:right;">20</div>
<div class="t" style="left:88.09999999999998px;top:216.95px;font-size:17.0px;color:#d4d4d4;font-weight:400;font-family:'Liberation Mono', monospace;letter-spacing:0.000px;letter-spacing:-0.652px;"><span style="color:#d4d4d4">  </span><span style="color:#ce9178">width: 100%;</span></div>
<div class="t" style="left:0px;top:240.77px;font-size:17.0px;color:#6e7681;font-weight:400;font-family:'Liberation Mono', monospace;letter-spacing:0.000px;width:53.799999999999955px;text-align:right;">21</div>
<div class="t" style="left:88.09999999999998px;top:240.77px;font-size:17.0px;color:#d4d4d4;font-weight:400;font-family:'Liberation Mono', monospace;letter-spacing:0.000px;letter-spacing:-0.652px;"><span style="color:#ce9178">`</span><span style="color:#d4d4d4">;</span></div>
<div class="t" style="left:0px;top:264.59px;font-size:17.0px;color:#6e7681;font-weight:400;font-family:'Liberation Mono', monospace;letter-spacing:0.000px;width:53.799999999999955px;text-align:right;">22</div>
<div class="t" style="left:0px;top:288.41px;font-size:17.0px;color:#6e7681;font-weight:400;font-family:'Liberation Mono', monospace;letter-spacing:0.000px;width:53.799999999999955px;text-align:right;">23</div>
<div class="t" style="left:88.09999999999998px;top:288.41px;font-size:17.0px;color:#d4d4d4;font-weight:400;font-family:'Liberation Mono', monospace;letter-spacing:0.000px;letter-spacing:-0.652px;"><span style="color:#c586c0">export</span><span style="color:#d4d4d4"> </span><span style="color:#569cd6">function</span><span style="color:#d4d4d4"> </span><span style="color:#dcdcaa">Companies</span><span style="color:#ffd700">()</span><span style="color:#d4d4d4"> </span><span style="color:#ffd700">{</span></div>
<div class="t" style="left:0px;top:312.23px;font-size:17.0px;color:#6e7681;font-weight:400;font-family:'Liberation Mono', monospace;letter-spacing:0.000px;width:53.799999999999955px;text-align:right;">24</div>
<div class="t" style="left:88.09999999999998px;top:312.23px;font-size:17.0px;color:#d4d4d4;font-weight:400;font-family:'Liberation Mono', monospace;letter-spacing:0.000px;letter-spacing:-0.652px;"><span style="color:#d4d4d4">  </span><span style="color:#569cd6">const</span><span style="color:#d4d4d4"> </span><span style="color:#da70d6">[</span><span style="color:#dcdcaa">insertCompany</span><span style="color:#da70d6">]</span><span style="color:#d4d4d4"> = </span><span style="color:#dcdcaa">useInsertOneCompanyMutation</span><span style="color:#da70d6">()</span><span style="color:#d4d4d4">;</span></div>
<div class="t" style="left:0px;top:336.05px;font-size:17.0px;color:#6e7681;font-weight:400;font-family:'Liberation Mono', monospace;letter-spacing:0.000px;width:53.799999999999955px;text-align:right;">25</div>
<div class="t" style="left:0px;top:359.87px;font-size:17.0px;color:#6e7681;font-weight:400;font-family:'Liberation Mono', monospace;letter-spacing:0.000px;width:53.799999999999955px;text-align:right;">26</div>
<div class="t" style="left:88.09999999999998px;top:359.87px;font-size:17.0px;color:#d4d4d4;font-weight:400;font-family:'Liberation Mono', monospace;letter-spacing:0.000px;letter-spacing:-0.652px;"><span style="color:#d4d4d4">  </span><span style="color:#569cd6">async</span><span style="color:#d4d4d4"> </span><span style="color:#569cd6">function</span><span style="color:#d4d4d4"> </span><span style="color:#dcdcaa">handleAddButtonClick</span><span style="color:#da70d6">()</span><span style="color:#d4d4d4"> </span><span style="color:#da70d6">{</span></div>
<div class="t" style="left:0px;top:383.69px;font-size:17.0px;color:#6e7681;font-weight:400;font-family:'Liberation Mono', monospace;letter-spacing:0.000px;width:53.799999999999955px;text-align:right;">27</div>
<div class="t" style="left:88.09999999999998px;top:383.69px;font-size:17.0px;color:#d4d4d4;font-weight:400;font-family:'Liberation Mono', monospace;letter-spacing:0.000px;letter-spacing:-0.652px;"><span style="color:#d4d4d4">    </span><span style="color:#c586c0">await</span><span style="color:#d4d4d4"> </span><span style="color:#dcdcaa">insertCompany</span><span style="color:#179fff">(</span><span style="color:#ffd700">{</span></div>
<div class="t" style="left:0px;top:407.51px;font-size:17.0px;color:#6e7681;font-weight:400;font-family:'Liberation Mono', monospace;letter-spacing:0.000px;width:53.799999999999955px;text-align:right;">28</div>
<div class="t" style="left:88.09999999999998px;top:407.51px;font-size:17.0px;color:#d4d4d4;font-weight:400;font-family:'Liberation Mono', monospace;letter-spacing:0.000px;letter-spacing:-0.652px;"><span style="color:#d4d4d4">      </span><span style="color:#9cdcfe">variables</span><span style="color:#d4d4d4">: </span><span style="color:#da70d6">{</span></div>
<div class="t" style="left:0px;top:431.33px;font-size:17.0px;color:#6e7681;font-weight:400;font-family:'Liberation Mono', monospace;letter-spacing:0.000px;width:53.799999999999955px;text-align:right;">29</div>
<div class="t" style="left:88.09999999999998px;top:431.33px;font-size:17.0px;color:#d4d4d4;font-weight:400;font-family:'Liberation Mono', monospace;letter-spacing:0.000px;letter-spacing:-0.652px;"><span style="color:#d4d4d4">        </span><span style="color:#9cdcfe">data</span><span style="color:#d4d4d4">: </span><span style="color:#179fff">{</span></div>
<div class="t" style="left:0px;top:455.15px;font-size:17.0px;color:#cccccc;font-weight:400;font-family:'Liberation Mono', monospace;letter-spacing:0.000px;width:53.799999999999955px;text-align:right;">30</div>
<div class="t" style="left:88.09999999999998px;top:455.15px;font-size:17.0px;color:#d4d4d4;font-weight:400;font-family:'Liberation Mono', monospace;letter-spacing:0.000px;letter-spacing:-0.652px;"><span style="color:#d4d4d4">          </span><span style="color:#9cdcfe">name</span><span style="color:#d4d4d4">: </span><span style="color:#ce9178">&#x27;&#x27;</span><span style="color:#d4d4d4">,</span></div>
<div class="t" style="left:0px;top:478.97px;font-size:17.0px;color:#6e7681;font-weight:400;font-family:'Liberation Mono', monospace;letter-spacing:0.000px;width:53.799999999999955px;text-align:right;">31</div>
<div class="t" style="left:88.09999999999998px;top:478.97px;font-size:17.0px;color:#d4d4d4;font-weight:400;font-family:'Liberation Mono', monospace;letter-spacing:0.000px;letter-spacing:-0.652px;"><span style="color:#d4d4d4">          </span><span style="color:#9cdcfe">domainName</span><span style="color:#d4d4d4">: </span><span style="color:#ce9178">&#x27;&#x27;</span><span style="color:#d4d4d4">,</span></div>
<div class="t" style="left:0px;top:502.79px;font-size:17.0px;color:#6e7681;font-weight:400;font-family:'Liberation Mono', monospace;letter-spacing:0.000px;width:53.799999999999955px;text-align:right;">32</div>
<div class="t" style="left:88.09999999999998px;top:502.79px;font-size:17.0px;color:#d4d4d4;font-weight:400;font-family:'Liberation Mono', monospace;letter-spacing:0.000px;letter-spacing:-0.652px;"><span style="color:#d4d4d4">          </span><span style="color:#9cdcfe">address</span><span style="color:#d4d4d4">: </span><span style="color:#ce9178">&#x27;&#x27;</span><span style="color:#d4d4d4">,</span></div>
<div class="t" style="left:0px;top:526.61px;font-size:17.0px;color:#6e7681;font-weight:400;font-family:'Liberation Mono', monospace;letter-spacing:0.000px;width:53.799999999999955px;text-align:right;">33</div>
<div class="t" style="left:88.09999999999998px;top:526.61px;font-size:17.0px;color:#d4d4d4;font-weight:400;font-family:'Liberation Mono', monospace;letter-spacing:0.000px;letter-spacing:-0.652px;"><span style="color:#d4d4d4">        </span><span style="color:#179fff">}</span><span style="color:#d4d4d4">,</span></div>
<div class="t" style="left:0px;top:550.43px;font-size:17.0px;color:#6e7681;font-weight:400;font-family:'Liberation Mono', monospace;letter-spacing:0.000px;width:53.799999999999955px;text-align:right;">34</div>
<div class="t" style="left:88.09999999999998px;top:550.43px;font-size:17.0px;color:#d4d4d4;font-weight:400;font-family:'Liberation Mono', monospace;letter-spacing:0.000px;letter-spacing:-0.652px;"><span style="color:#d4d4d4">      </span><span style="color:#da70d6">}</span><span style="color:#d4d4d4">,</span></div>
<div class="t" style="left:0px;top:574.25px;font-size:17.0px;color:#6e7681;font-weight:400;font-family:'Liberation Mono', monospace;letter-spacing:0.000px;width:53.799999999999955px;text-align:right;">35</div>
<div class="t" style="left:88.09999999999998px;top:574.25px;font-size:17.0px;color:#d4d4d4;font-weight:400;font-family:'Liberation Mono', monospace;letter-spacing:0.000px;letter-spacing:-0.652px;"><span style="color:#d4d4d4">      </span><span style="color:#9cdcfe">refetchQueries</span><span style="color:#d4d4d4">: </span><span style="color:#da70d6">[</span></div>
<div class="t" style="left:0px;top:598.07px;font-size:17.0px;color:#6e7681;font-weight:400;font-family:'Liberation Mono', monospace;letter-spacing:0.000px;width:53.799999999999955px;text-align:right;">36</div>
<div class="t" style="left:88.09999999999998px;top:598.07px;font-size:17.0px;color:#d4d4d4;font-weight:400;font-family:'Liberation Mono', monospace;letter-spacing:0.000px;letter-spacing:-0.652px;"><span style="color:#d4d4d4">        </span><span style="color:#5fa0d8">getOperationName</span><span style="color:#179fff">(</span><span style="color:#4fc1ff">GET_COMPANIES</span><span style="color:#179fff">)</span><span style="color:#d4d4d4"> ?? </span><span style="color:#ce9178">&#x27;&#x27;</span><span style="color:#d4d4d4">,</span></div>
<div class="r" style="left:0;top:0;width:1338px;height:6px;box-shadow:inset 0 6px 6px -6px #000000"></div>
<div class="r" style="left:258px;top:462px;width:2.5px;height:24px;background:#aeafad"></div>
</div>
<svg class="r" style="left:1828.0px;top:113.3px;opacity:0.36" width="153.0" height="200" viewBox="0 0 153.0 200"><rect x="0.00" y="0.30" width="7.62" height="1.9" fill="#c586c0"/><rect x="9.24" y="0.30" width="1.02" height="1.9" fill="#d4d4d4"/><rect x="11.88" y="0.30" width="20.82" height="1.9" fill="#9cdcfe"/><rect x="34.32" y="0.30" width="1.02" height="1.9" fill="#d4d4d4"/><rect x="36.96" y="0.30" width="4.98" height="1.9" fill="#c586c0"/><rect x="43.56" y="0.30" width="34.02" height="1.9" fill="#ce9178"/><rect x="77.88" y="0.30" width="1.02" height="1.9" fill="#d4d4d4"/><rect x="0.00" y="2.94" width="7.62" height="1.9" fill="#c586c0"/><rect x="9.24" y="2.94" width="1.02" height="1.9" fill="#d4d4d4"/><rect x="11.88" y="2.94" width="10.26" height="1.9" fill="#9cdcfe"/><rect x="23.76" y="2.94" width="1.02" height="1.9" fill="#d4d4d4"/><rect x="26.40" y="2.94" width="4.98" height="1.9" fill="#c586c0"/><rect x="33.00" y="2.94" width="20.82" height="1.9" fill="#ce9178"/><rect x="54.12" y="2.94" width="1.02" height="1.9" fill="#d4d4d4"/><rect x="0.00" y="5.58" width="7.62" height="1.9" fill="#c586c0"/><rect x="9.24" y="5.58" width="7.62" height="1.9" fill="#9cdcfe"/><rect x="18.48" y="5.58" width="4.98" height="1.9" fill="#c586c0"/><rect x="25.08" y="5.58" width="22.14" height="1.9" fill="#ce9178"/><rect x="47.52" y="5.58" width="1.02" height="1.9" fill="#d4d4d4"/><rect x="0.00" y="10.86" width="7.62" height="1.9" fill="#c586c0"/><rect x="9.24" y="10.86" width="1.02" height="1.9" fill="#d4d4d4"/><rect x="11.88" y="10.86" width="16.86" height="1.9" fill="#4fc1ff"/><rect x="30.36" y="10.86" width="1.02" height="1.9" fill="#d4d4d4"/><rect x="33.00" y="10.86" width="4.98" height="1.9" fill="#c586c0"/><rect x="39.60" y="10.86" width="28.74" height="1.9" fill="#ce9178"/><rect x="68.64" y="10.86" width="1.02" height="1.9" fill="#d4d4d4"/><rect x="0.00" y="13.50" width="7.62" height="1.9" fill="#c586c0"/><rect x="9.24" y="13.50" width="1.02" height="1.9" fill="#d4d4d4"/><rect x="11.88" y="13.50" width="15.54" height="1.9" fill="#9cdcfe"/><rect x="29.04" y="13.50" width="1.02" height="1.9" fill="#d4d4d4"/><rect x="31.68" y="13.50" width="4.98" height="1.9" fill="#c586c0"/><rect x="38.28" y="13.50" width="56.46" height="1.9" fill="#ce9178"/><rect x="95.04" y="13.50" width="1.02" height="1.9" fill="#d4d4d4"/><rect x="0.00" y="16.14" width="7.62" height="1.9" fill="#c586c0"/><rect x="9.24" y="16.14" width="1.02" height="1.9" fill="#d4d4d4"/><rect x="11.88" y="16.14" width="60.42" height="1.9" fill="#9cdcfe"/><rect x="73.92" y="16.14" width="1.02" height="1.9" fill="#d4d4d4"/><rect x="76.56" y="16.14" width="4.98" height="1.9" fill="#c586c0"/><rect x="83.16" y="16.14" width="69.54" height="1.9" fill="#ce9178"/><rect x="0.00" y="18.78" width="7.62" height="1.9" fill="#c586c0"/><rect x="9.24" y="18.78" width="1.02" height="1.9" fill="#d4d4d4"/><rect x="11.88" y="18.78" width="45.90" height="1.9" fill="#9cdcfe"/><rect x="59.40" y="18.78" width="1.02" height="1.9" fill="#d4d4d4"/><rect x="62.04" y="18.78" width="4.98" height="1.9" fill="#c586c0"/><rect x="68.64" y="18.78" width="84.06" height="1.9" fill="#ce9178"/><rect x="0.00" y="21.42" width="7.62" height="1.9" fill="#c586c0"/><rect x="9.24" y="21.42" width="1.02" height="1.9" fill="#d4d4d4"/><rect x="11.88" y="21.42" width="28.74" height="1.9" fill="#9cdcfe"/><rect x="42.24" y="21.42" width="1.02" height="1.9" fill="#d4d4d4"/><rect x="44.88" y="21.42" width="4.98" height="1.9" fill="#c586c0"/><rect x="51.48" y="21.42" width="14.22" height="1.9" fill="#ce9178"/><rect x="66.00" y="21.42" width="1.02" height="1.9" fill="#d4d4d4"/><rect x="0.00" y="24.06" width="7.62" height="1.9" fill="#c586c0"/><rect x="9.24" y="24.06" width="1.02" height="1.9" fill="#d4d4d4"/><rect x="11.88" y="24.06" width="24.78" height="1.9" fill="#9cdcfe"/><rect x="38.28" y="24.06" width="1.02" height="1.9" fill="#d4d4d4"/><rect x="40.92" y="24.06" width="4.98" height="1.9" fill="#c586c0"/><rect x="47.52" y="24.06" width="57.78" height="1.9" fill="#ce9178"/><rect x="105.60" y="24.06" width="1.02" height="1.9" fill="#d4d4d4"/><rect x="0.00" y="26.70" width="7.62" height="1.9" fill="#c586c0"/><rect x="9.24" y="26.70" width="1.02" height="1.9" fill="#d4d4d4"/><rect x="11.88" y="26.70" width="26.10" height="1.9" fill="#9cdcfe"/><rect x="39.60" y="26.70" width="1.02" height="1.9" fill="#d4d4d4"/><rect x="42.24" y="26.70" width="4.98" height="1.9" fill="#c586c0"/><rect x="48.84" y="26.70" width="72.30" height="1.9" fill="#ce9178"/><rect x="121.44" y="26.70" width="1.02" height="1.9" fill="#d4d4d4"/><rect x="0.00" y="29.34" width="7.62" height="1.9" fill="#c586c0"/><rect x="9.24" y="29.34" width="1.02" height="1.9" fill="#d4d4d4"/><rect x="11.88" y="29.34" width="15.54" height="1.9" fill="#9cdcfe"/><rect x="29.04" y="29.34" width="1.02" height="1.9" fill="#d4d4d4"/><rect x="31.68" y="29.34" width="4.98" height="1.9" fill="#c586c0"/><rect x="38.28" y="29.34" width="41.94" height="1.9" fill="#ce9178"/><rect x="80.52" y="29.34" width="1.02" height="1.9" fill="#d4d4d4"/><rect x="0.00" y="31.98" width="7.62" height="1.9" fill="#c586c0"/><rect x="9.24" y="31.98" width="1.02" height="1.9" fill="#d4d4d4"/><rect x="11.88" y="31.98" width="14.22" height="1.9" fill="#9cdcfe"/><rect x="27.72" y="31.98" width="1.02" height="1.9" fill="#d4d4d4"/><rect x="30.36" y="31.98" width="4.98" height="1.9" fill="#c586c0"/><rect x="36.96" y="31.98" width="68.34" height="1.9" fill="#ce9178"/><rect x="105.60" y="31.98" width="1.02" height="1.9" fill="#d4d4d4"/><rect x="0.00" y="34.62" width="7.62" height="1.9" fill="#c586c0"/><rect x="9.24" y="34.62" width="1.02" height="1.9" fill="#d4d4d4"/><rect x="11.88" y="34.62" width="35.34" height="1.9" fill="#9cdcfe"/><rect x="48.84" y="34.62" width="1.02" height="1.9" fill="#d4d4d4"/><rect x="51.48" y="34.62" width="4.98" height="1.9" fill="#c586c0"/><rect x="58.08" y="34.62" width="27.42" height="1.9" fill="#ce9178"/><rect x="85.80" y="34.62" width="1.02" height="1.9" fill="#d4d4d4"/><rect x="0.00" y="39.90" width="7.62" height="1.9" fill="#c586c0"/><rect x="9.24" y="39.90" width="1.02" height="1.9" fill="#d4d4d4"/><rect x="11.88" y="39.90" width="26.10" height="1.9" fill="#4fc1ff"/><rect x="39.60" y="39.90" width="1.02" height="1.9" fill="#d4d4d4"/><rect x="42.24" y="39.90" width="4.98" height="1.9" fill="#c586c0"/><rect x="48.84" y="39.90" width="48.54" height="1.9" fill="#ce9178"/><rect x="97.68" y="39.90" width="1.02" height="1.9" fill="#d4d4d4"/><rect x="0.00" y="45.18" width="6.30" height="1.9" fill="#569cd6"/><rect x="7.92" y="45.18" width="26.10" height="1.9" fill="#9cdcfe"/><rect x="35.64" y="45.18" width="1.02" height="1.9" fill="#d4d4d4"/><rect x="38.28" y="45.18" width="7.62" height="1.9" fill="#9cdcfe"/><rect x="46.20" y="45.18" width="1.02" height="1.9" fill="#d4d4d4"/><rect x="47.52" y="45.18" width="3.66" height="1.9" fill="#9cdcfe"/><rect x="51.48" y="45.18" width="1.02" height="1.9" fill="#ce9178"/><rect x="2.64" y="47.82" width="8.94" height="1.9" fill="#ce9178"/><rect x="11.88" y="47.82" width="1.02" height="1.9" fill="#ce9178"/><rect x="14.52" y="47.82" width="4.98" height="1.9" fill="#ce9178"/><rect x="19.80" y="47.82" width="1.02" height="1.9" fill="#ce9178"/><rect x="2.64" y="50.46" width="6.30" height="1.9" fill="#ce9178"/><rect x="9.24" y="50.46" width="1.02" height="1.9" fill="#ce9178"/><rect x="15.84" y="50.46" width="2.34" height="1.9" fill="#ce9178"/><rect x="0.00" y="53.10" width="1.02" height="1.9" fill="#ce9178"/><rect x="1.32" y="53.10" width="1.02" height="1.9" fill="#d4d4d4"/><rect x="0.00" y="58.38" width="7.62" height="1.9" fill="#c586c0"/><rect x="9.24" y="58.38" width="10.26" height="1.9" fill="#569cd6"/><rect x="21.12" y="58.38" width="11.58" height="1.9" fill="#dcdcaa"/><rect x="33.00" y="58.38" width="2.34" height="1.9" fill="#d4d4d4"/><rect x="36.96" y="58.38" width="1.02" height="1.9" fill="#d4d4d4"/><rect x="2.64" y="61.02" width="6.30" height="1.9" fill="#569cd6"/><rect x="10.56" y="61.02" width="1.02" height="1.9" fill="#d4d4d4"/><rect x="11.88" y="61.02" width="16.86" height="1.9" fill="#9cdcfe"/><rect x="29.04" y="61.02" width="1.02" height="1.9" fill="#d4d4d4"/><rect x="31.68" y="61.02" width="1.02" height="1.9" fill="#d4d4d4"/><rect x="34.32" y="61.02" width="35.34" height="1.9" fill="#dcdcaa"/><rect x="69.96" y="61.02" width="3.66" height="1.9" fill="#d4d4d4"/><rect x="2.64" y="66.30" width="6.30" height="1.9" fill="#569cd6"/><rect x="10.56" y="66.30" width="10.26" height="1.9" fill="#569cd6"/><rect x="22.44" y="66.30" width="26.10" height="1.9" fill="#dcdcaa"/><rect x="48.84" y="66.30" width="2.34" height="1.9" fill="#d4d4d4"/><rect x="52.80" y="66.30" width="1.02" height="1.9" fill="#d4d4d4"/><rect x="5.28" y="68.94" width="6.30" height="1.9" fill="#c586c0"/><rect x="13.20" y="68.94" width="16.86" height="1.9" fill="#dcdcaa"/><rect x="30.36" y="68.94" width="2.34" height="1.9" fill="#d4d4d4"/><rect x="7.92" y="71.58" width="11.58" height="1.9" fill="#9cdcfe"/><rect x="19.80" y="71.58" width="1.02" height="1.9" fill="#d4d4d4"/><rect x="22.44" y="71.58" width="1.02" height="1.9" fill="#d4d4d4"/><rect x="10.56" y="74.22" width="4.98" height="1.9" fill="#9cdcfe"/><rect x="15.84" y="74.22" width="1.02" height="1.9" fill="#d4d4d4"/><rect x="18.48" y="74.22" width="1.02" height="1.9" fill="#d4d4d4"/><rect x="13.20" y="76.86" width="4.98" height="1.9" fill="#9cdcfe"/><rect x="18.48" y="76.86" width="1.02" height="1.9" fill="#d4d4d4"/><rect x="21.12" y="76.86" width="2.34" height="1.9" fill="#ce9178"/><rect x="23.76" y="76.86" width="1.02" height="1.9" fill="#d4d4d4"/><rect x="13.20" y="79.50" width="12.90" height="1.9" fill="#9cdcfe"/><rect x="26.40" y="79.50" width="1.02" height="1.9" fill="#d4d4d4"/><rect x="29.04" y="79.50" width="2.34" height="1.9" fill="#ce9178"/><rect x="31.68" y="79.50" width="1.02" height="1.9" fill="#d4d4d4"/><rect x="13.20" y="82.14" width="8.94" height="1.9" fill="#9cdcfe"/><rect x="22.44" y="82.14" width="1.02" height="1.9" fill="#d4d4d4"/><rect x="25.08" y="82.14" width="2.34" height="1.9" fill="#ce9178"/><rect x="27.72" y="82.14" width="1.02" height="1.9" fill="#d4d4d4"/><rect x="10.56" y="84.78" width="2.34" height="1.9" fill="#d4d4d4"/><rect x="7.92" y="87.42" width="2.34" height="1.9" fill="#d4d4d4"/><rect x="7.92" y="90.06" width="18.18" height="1.9" fill="#9cdcfe"/><rect x="26.40" y="90.06" width="1.02" height="1.9" fill="#d4d4d4"/><rect x="29.04" y="90.06" width="1.02" height="1.9" fill="#d4d4d4"/><rect x="10.56" y="92.70" width="20.82" height="1.9" fill="#dcdcaa"/><rect x="31.68" y="92.70" width="1.02" height="1.9" fill="#d4d4d4"/><rect x="33.00" y="92.70" width="16.86" height="1.9" fill="#4fc1ff"/><rect x="50.16" y="92.70" width="1.02" height="1.9" fill="#d4d4d4"/><rect x="52.80" y="92.70" width="2.34" height="1.9" fill="#d4d4d4"/><rect x="56.76" y="92.70" width="2.34" height="1.9" fill="#ce9178"/><rect x="59.40" y="92.70" width="1.02" height="1.9" fill="#d4d4d4"/><rect x="10.56" y="95.34" width="20.82" height="1.9" fill="#dcdcaa"/><rect x="31.68" y="95.34" width="1.02" height="1.9" fill="#d4d4d4"/><rect x="33.00" y="95.34" width="26.10" height="1.9" fill="#4fc1ff"/><rect x="59.40" y="95.34" width="1.02" height="1.9" fill="#d4d4d4"/><rect x="62.04" y="95.34" width="2.34" height="1.9" fill="#d4d4d4"/><rect x="66.00" y="95.34" width="2.34" height="1.9" fill="#ce9178"/><rect x="68.64" y="95.34" width="1.02" height="1.9" fill="#d4d4d4"/><rect x="7.92" y="97.98" width="2.34" height="1.9" fill="#d4d4d4"/><rect x="5.28" y="100.62" width="3.66" height="1.9" fill="#d4d4d4"/><rect x="2.64" y="103.26" width="1.02" height="1.9" fill="#d4d4d4"/><rect x="2.64" y="108.54" width="6.30" height="1.9" fill="#569cd6"/><rect x="10.56" y="108.54" width="6.30" height="1.9" fill="#9cdcfe"/><rect x="18.48" y="108.54" width="1.02" height="1.9" fill="#d4d4d4"/><rect x="21.12" y="108.54" width="10.26" height="1.9" fill="#dcdcaa"/><rect x="31.68" y="108.54" width="3.66" height="1.9" fill="#d4d4d4"/><rect x="2.64" y="113.82" width="7.62" height="1.9" fill="#c586c0"/><rect x="11.88" y="113.82" width="1.02" height="1.9" fill="#d4d4d4"/><rect x="5.28" y="116.46" width="2.34" height="1.9" fill="#d4d4d4"/><rect x="7.92" y="119.10" width="1.02" height="1.9" fill="#d4d4d4"/><rect x="9.24" y="119.10" width="24.78" height="1.9" fill="#4ec9b0"/><rect x="10.56" y="121.74" width="6.30" height="1.9" fill="#9cdcfe"/><rect x="17.16" y="121.74" width="2.34" height="1.9" fill="#d4d4d4"/><rect x="19.80" y="121.74" width="11.58" height="1.9" fill="#9cdcfe"/><rect x="31.68" y="121.74" width="1.02" height="1.9" fill="#ce9178"/><rect x="10.56" y="124.38" width="4.98" height="1.9" fill="#9cdcfe"/><rect x="15.84" y="124.38" width="3.66" height="1.9" fill="#d4d4d4"/><rect x="19.80" y="124.38" width="28.74" height="1.9" fill="#4ec9b0"/><rect x="50.16" y="124.38" width="4.98" height="1.9" fill="#9cdcfe"/><rect x="55.44" y="124.38" width="2.34" height="1.9" fill="#d4d4d4"/><rect x="58.08" y="124.38" width="6.30" height="1.9" fill="#9cdcfe"/><rect x="64.68" y="124.38" width="1.02" height="1.9" fill="#d4d4d4"/><rect x="66.00" y="124.38" width="4.98" height="1.9" fill="#9cdcfe"/><rect x="71.28" y="124.38" width="1.02" height="1.9" fill="#d4d4d4"/><rect x="72.60" y="124.38" width="4.98" height="1.9" fill="#9cdcfe"/><rect x="77.88" y="124.38" width="1.02" height="1.9" fill="#d4d4d4"/><rect x="79.20" y="124.38" width="2.34" height="1.9" fill="#9cdcfe"/><rect x="81.84" y="124.38" width="1.02" height="1.9" fill="#d4d4d4"/><rect x="84.48" y="124.38" width="3.66" height="1.9" fill="#d4d4d4"/><rect x="10.56" y="127.02" width="20.82" height="1.9" fill="#9cdcfe"/><rect x="31.68" y="127.02" width="2.34" height="1.9" fill="#d4d4d4"/><rect x="34.32" y="127.02" width="26.10" height="1.9" fill="#9cdcfe"/><rect x="60.72" y="127.02" width="1.02" height="1.9" fill="#d4d4d4"/><rect x="7.92" y="129.66" width="1.02" height="1.9" fill="#d4d4d4"/><rect x="10.56" y="132.30" width="1.02" height="1.9" fill="#d4d4d4"/><rect x="11.88" y="132.30" width="14.22" height="1.9" fill="#4ec9b0"/><rect x="27.72" y="132.30" width="19.50" height="1.9" fill="#9cdcfe"/><rect x="47.52" y="132.30" width="2.34" height="1.9" fill="#d4d4d4"/><rect x="50.16" y="132.30" width="15.54" height="1.9" fill="#9cdcfe"/><rect x="66.00" y="132.30" width="2.34" height="1.9" fill="#d4d4d4"/><rect x="13.20" y="134.94" width="1.02" height="1.9" fill="#d4d4d4"/><rect x="14.52" y="134.94" width="26.10" height="1.9" fill="#4ec9b0"/><rect x="40.92" y="134.94" width="1.02" height="1.9" fill="#d4d4d4"/><rect x="15.84" y="137.58" width="1.02" height="1.9" fill="#d4d4d4"/><rect x="17.16" y="137.58" width="15.54" height="1.9" fill="#4ec9b0"/><rect x="34.32" y="137.58" width="2.34" height="1.9" fill="#d4d4d4"/><rect x="13.20" y="140.22" width="2.34" height="1.9" fill="#d4d4d4"/><rect x="15.84" y="140.22" width="26.10" height="1.9" fill="#4ec9b0"/><rect x="42.24" y="140.22" width="1.02" height="1.9" fill="#d4d4d4"/><rect x="13.20" y="142.86" width="1.02" height="1.9" fill="#d4d4d4"/><rect x="14.52" y="142.86" width="26.10" height="1.9" fill="#4ec9b0"/><rect x="40.92" y="142.86" width="1.02" height="1.9" fill="#d4d4d4"/><rect x="15.84" y="145.50" width="1.02" height="1.9" fill="#d4d4d4"/><rect x="17.16" y="145.50" width="60.42" height="1.9" fill="#4ec9b0"/><rect x="79.20" y="145.50" width="2.34" height="1.9" fill="#d4d4d4"/><rect x="15.84" y="148.14" width="1.02" height="1.9" fill="#d4d4d4"/><rect x="17.16" y="148.14" width="45.90" height="1.9" fill="#4ec9b0"/><rect x="64.68" y="148.14" width="2.34" height="1.9" fill="#d4d4d4"/><rect x="13.20" y="150.78" width="2.34" height="1.9" fill="#d4d4d4"/><rect x="15.84" y="150.78" width="26.10" height="1.9" fill="#4ec9b0"/><rect x="42.24" y="150.78" width="1.02" height="1.9" fill="#d4d4d4"/><rect x="10.56" y="153.42" width="2.34" height="1.9" fill="#d4d4d4"/><rect x="13.20" y="153.42" width="14.22" height="1.9" fill="#4ec9b0"/><rect x="27.72" y="153.42" width="1.02" height="1.9" fill="#d4d4d4"/><rect x="7.92" y="156.06" width="2.34" height="1.9" fill="#d4d4d4"/><rect x="10.56" y="156.06" width="24.78" height="1.9" fill="#4ec9b0"/><rect x="35.64" y="156.06" width="1.02" height="1.9" fill="#d4d4d4"/><rect x="5.28" y="158.70" width="3.66" height="1.9" fill="#d4d4d4"/><rect x="2.64" y="161.34" width="2.34" height="1.9" fill="#d4d4d4"/><rect x="0.00" y="163.98" width="1.02" height="1.9" fill="#d4d4d4"/></svg>
<div class="r" style="left:1981px;top:112px;width:1.2px;height:623px;background:#171717;"></div>
<div class="r" style="left:1982px;top:312.5px;width:18px;height:3.5px;background:#a0a0a0;"></div>
<div class="t" style="left:689.4px;top:738.80px;font-size:14.1px;color:#9d9d9d;font-weight:400;font-family:'Liberation Sans', sans-serif;letter-spacing:0.059px;">PROBLEMS</div>
<div class="t" style="left:800.2px;top:738.80px;font-size:14.1px;color:#9d9d9d;font-weight:400;font-family:'Liberation Sans', sans-serif;letter-spacing:0.410px;">OUTPUT</div>
<div class="t" style="left:893px;top:738.80px;font-size:14.1px;color:#9d9d9d;font-weight:400;font-family:'Liberation Sans', sans-serif;letter-spacing:0.141px;">DEBUG CONSOLE</div>
<div class="t" style="left:1050.4px;top:738.80px;font-size:14.1px;color:#e7e7e7;font-weight:400;font-family:'Liberation Sans', sans-serif;letter-spacing:0.167px;">TERMINAL</div>
<div class="r" style="left:1047px;top:775px;width:80px;height:2px;background:#3a7ad2;"></div>
<div class="t" style="left:1155.4px;top:738.80px;font-size:14.1px;color:#9d9d9d;font-weight:400;font-family:'Liberation Sans', sans-serif;letter-spacing:-0.059px;">PORTS</div>
<div class="r" style="left:1217.10px;top:746.30px;width:24.80px;height:24.80px;border-radius:50%;background:#3a7ad2;"></div>
<div class="t" style="left:1225.2px;top:739.30px;font-size:14px;color:#ffffff;font-weight:700;font-family:'Liberation Sans', sans-serif;letter-spacing:0.000px;">1</div>
<div class="t" style="left:690.4px;top:782.10px;font-size:15.38px;color:#cccccc;font-weight:400;font-family:'Liberation Mono', monospace;letter-spacing:0.000px;">root@0a42ecd84891:/app#</div>
<svg class="r" style="left:1696px;top:746px;" width="22" height="25" viewBox="0 0 22 25"><path d="M11 1.5 L20 6.5 V18.5 L11 23.5 L2 18.5 V6.5 Z" fill="none" stroke="#cccccc" stroke-width="1.3" stroke-linejoin="round"/><path d="M11 12 L20 6.8 V18.3 L11 23.3 Z" fill="#cccccc"/><path d="M2 6.5 L11 12 V23.5" fill="none" stroke="#cccccc" stroke-width="1.3"/><text x="12.5" y="20" font-size="7" font-family="Liberation Mono" fill="#181818">$</text></svg>
<div class="t" style="left:1723.6px;top:739.11px;font-size:17px;color:#cccccc;font-weight:400;font-family:'Liberation Sans', sans-serif;letter-spacing:-1.119px;">bash</div>
<svg class="r" style="left:1770px;top:748px;" width="20" height="20" viewBox="0 0 20 20"><path d="M10 1 V19 M1 10 H19" stroke="#cccccc" stroke-width="1.7"/></svg>
<svg class="r" style="left:1795px;top:752px;" width="14" height="12" viewBox="0 0 14 12"><path d="M1.5 3.5 L7 9 L12.5 3.5" fill="none" stroke="#cccccc" stroke-width="1.3"/></svg>
<svg class="r" style="left:1823px;top:748px;" width="20" height="20" viewBox="0 0 20 20"><rect x="1.5" y="1.5" width="17" height="17" rx="2.5" fill="none" stroke="#cccccc" stroke-width="1.7"/><path d="M10 1.5 V18.5" stroke="#cccccc" stroke-width="1.7"/></svg>
<svg class="r" style="left:1856px;top:747px;" width="20" height="22" viewBox="0 0 20 22"><path d="M1.5 4.5 H18.5 M6.5 4.5 V2 H13.5 V4.5 M3.5 4.5 L4.5 19.5 A1.5 1.5 0 0 0 6 21 H14 A1.5 1.5 0 0 0 15.5 19.5 L16.5 4.5 M7.5 8 V17.5 M10 8 V17.5 M12.5 8 V17.5" fill="none" stroke="#cccccc" stroke-width="1.6"/></svg>
<div class="r" style="left:1891.70px;top:756.80px;width:3.60px;height:3.60px;border-radius:50%;background:#cccccc;"></div>
<div class="r" style="left:1899.20px;top:756.80px;width:3.60px;height:3.60px;border-radius:50%;background:#cccccc;"></div>
<div class="r" style="left:1906.70px;top:756.80px;width:3.60px;height:3.60px;border-radius:50%;background:#cccccc;"></div>
<svg class="r" style="left:1925px;top:750px;" width="20" height="16" viewBox="0 0 20 16"><path d="M2.5 12 L10 4.5 L17.5 12" fill="none" stroke="#cccccc" stroke-width="1.6"/></svg>
<svg class="r" style="left:1961px;top:750px;" width="18" height="18" viewBox="0 0 18 18"><path d="M2.6 2.4 L15.2 15 M15.2 2.4 L2.6 15" stroke="#cccccc" stroke-width="1.5"/></svg>
<div class="r" style="left:0px;top:1220px;width:387.8px;height:29px;background:#3a7ad2;border-bottom-left-radius:10px"></div>
<svg class="r" style="left:14px;top:1224px;" width="20" height="20" viewBox="0 0 20 20"><path d="M3 6.5 L8.3 11.8 L3 17.1 M14.2 2 L8.8 7.4 L14.2 12.8" fill="none" stroke="#ffffff" stroke-width="1.4"/></svg>
<div class="t" style="left:36.4px;top:1214.20px;font-size:17.2px;color:#ffffff;font-weight:400;font-family:'Liberation Sans', sans-serif;letter-spacing:0.029px;">Container dev-twenty-dev (dev-twenty-dev...</div>
<svg class="r" style="left:395px;top:1224px;" width="20" height="22" viewBox="0 0 20 22"><circle cx="4.5" cy="4" r="2.6" fill="none" stroke="#cccccc" stroke-width="1.4"/><circle cx="13.5" cy="7.5" r="2.6" fill="none" stroke="#cccccc" stroke-width="1.4"/><circle cx="4.5" cy="17.5" r="2.6" fill="none" stroke="#cccccc" stroke-width="1.4"/><path d="M4.5 6.6 V14.9 M13.5 10.1 Q13.5 14 7 14.5" fill="none" stroke="#cccccc" stroke-width="1.4"/></svg>
<div class="t" style="left:418.4px;top:1214.20px;font-size:17.2px;color:#cccccc;font-weight:400;font-family:'Liberation Sans', sans-serif;letter-spacing:-0.211px;">main*</div>
<svg class="r" style="left:468px;top:1224px;" width="22" height="20" viewBox="0 0 22 20"><path d="M3.5 9 A7.5 7.5 0 0 1 17 5.5 M18.5 11 A7.5 7.5 0 0 1 5 14.5" fill="none" stroke="#cccccc" stroke-width="1.5"/><path d="M17.5 1.5 V6 H13 M4.5 18.5 V14 H9" fill="none" stroke="#cccccc" stroke-width="1.5"/></svg>
<svg class="r" style="left:506px;top:1225px;" width="19" height="19" viewBox="0 0 19 19"><circle cx="9.5" cy="9.5" r="7.8" fill="none" stroke="#cccccc" stroke-width="1.4"/><path d="M6.3 6.3 L12.7 12.7 M12.7 6.3 L6.3 12.7" stroke="#cccccc" stroke-width="1.4"/></svg>
<div class="t" style="left:529.8px;top:1214.20px;font-size:17.2px;color:#cccccc;font-weight:400;font-family:'Liberation Sans', sans-serif;letter-spacing:0.000px;">0</div>
<svg class="r" style="left:544px;top:1224px;" width="19" height="20" viewBox="0 0 19 20"><path d="M9.5 2 L17.5 17.5 H1.5 Z" fill="none" stroke="#cccccc" stroke-width="1.4" stroke-linejoin="round"/><path d="M9.5 7.5 V12.5 M9.5 14 V15.5" stroke="#cccccc" stroke-width="1.5"/></svg>
<div class="t" style="left:567.3px;top:1214.20px;font-size:17.2px;color:#cccccc;font-weight:400;font-family:'Liberation Sans', sans-serif;letter-spacing:0.000px;">0</div>
<svg class="r" style="left:598px;top:1224px;" width="20" height="20" viewBox="0 0 20 20"><path d="M4 3 Q1 9.5 4 16 M16 3 Q19 9.5 16 16 M6.5 5.5 Q4.5 9.5 6.5 13.5 M13.5 5.5 Q15.5 9.5 13.5 13.5" fill="none" stroke="#cccccc" stroke-width="1.4"/><circle cx="10" cy="9" r="1.8" fill="#cccccc"/><path d="M10 10 L6 19 M10 10 L14 19 M7.2 16 H12.8" fill="none" stroke="#cccccc" stroke-width="1.4"/></svg>
<div class="t" style="left:621.2px;top:1214.20px;font-size:17.2px;color:#cccccc;font-weight:400;font-family:'Liberation Sans', sans-serif;letter-spacing:0.000px;">4</div>
<div class="t" style="left:1399px;top:1214.20px;font-size:17.2px;color:#cccccc;font-weight:400;font-family:'Liberation Sans', sans-serif;letter-spacing:-0.081px;">Ln 30, Col 19</div>
<div class="t" style="left:1521.6px;top:1214.20px;font-size:17.2px;color:#cccccc;font-weight:400;font-family:'Liberation Sans', sans-serif;letter-spacing:-0.371px;">Spaces: 2</div>
<div class="t" style="left:1616.8px;top:1214.20px;font-size:17.2px;color:#cccccc;font-weight:400;font-family:'Liberation Sans', sans-serif;letter-spacing:-0.161px;">UTF-8</div>
<div class="t" style="left:1686px;top:1214.20px;font-size:17.2px;color:#cccccc;font-weight:400;font-family:'Liberation Sans', sans-serif;letter-spacing:-0.881px;">LF</div>
<div class="t" style="left:1723.5px;top:1213.20px;font-size:16px;color:#cccccc;font-weight:400;font-family:'Liberation Sans', sans-serif;letter-spacing:0.120px;-webkit-text-stroke:0;">{ }</div>
<div class="t" style="left:1749.8px;top:1214.20px;font-size:17.2px;color:#cccccc;font-weight:400;font-family:'Liberation Sans', sans-serif;letter-spacing:-0.271px;">TypeScript JSX</div>
<svg class="r" style="left:1880px;top:1224px;" width="23" height="22" viewBox="0 0 23 22"><path d="M2.5 12.5 Q2 20.5 11.5 20.5 Q21 20.5 20.5 12.5 Z" fill="#cccccc"/><path d="M2.2 13 Q1.8 9 3.5 6.5" fill="none" stroke="#cccccc" stroke-width="1.8"/><path d="M20.8 13 Q21.2 9 19.5 6.5" fill="none" stroke="#cccccc" stroke-width="1.8"/><ellipse cx="7.6" cy="8" rx="4.3" ry="4" fill="none" stroke="#cccccc" stroke-width="1.9"/><ellipse cx="15.4" cy="8" rx="4.3" ry="4" fill="none" stroke="#cccccc" stroke-width="1.9"/><rect x="8.3" y="14" width="2.2" height="4" fill="#181818"/><rect x="12.5" y="14" width="2.2" height="4" fill="#181818"/></svg>
<svg class="r" style="left:1921px;top:1223px;" width="22" height="22" viewBox="0 0 22 22"><circle cx="8" cy="8.5" r="3.2" fill="none" stroke="#cccccc" stroke-width="1.4"/><path d="M2 19 Q2.5 13 8 13 Q13.5 13 14 19" fill="none" stroke="#cccccc" stroke-width="1.4"/><path d="M10 2 H20 V10 H16 L13.5 12.5 V10" fill="none" stroke="#cccccc" stroke-width="1.4" stroke-linejoin="round"/></svg>
<svg class="r" style="left:1961px;top:1223px;" width="20" height="22" viewBox="0 0 20 22"><path d="M10 2.5 Q15.5 2.5 15.5 8.5 V14 L17.5 16.5 H2.5 L4.5 14 V8.5 Q4.5 2.5 10 2.5 Z M7.5 19 Q10 21.5 12.5 19" fill="none" stroke="#cccccc" stroke-width="1.4" stroke-linejoin="round"/></svg>
<div class="r" style="left:0;top:0;width:1998px;height:1247px;border-radius:10px;border:1px solid #2b2b2b;border-top-color:#a0a0a0;border-left-color:transparent;border-bottom-color:transparent;"></div>
<div class="r" style="left:10px;top:1px;width:1980px;height:1px;background:#111111;"></div>
</div></body></html>
